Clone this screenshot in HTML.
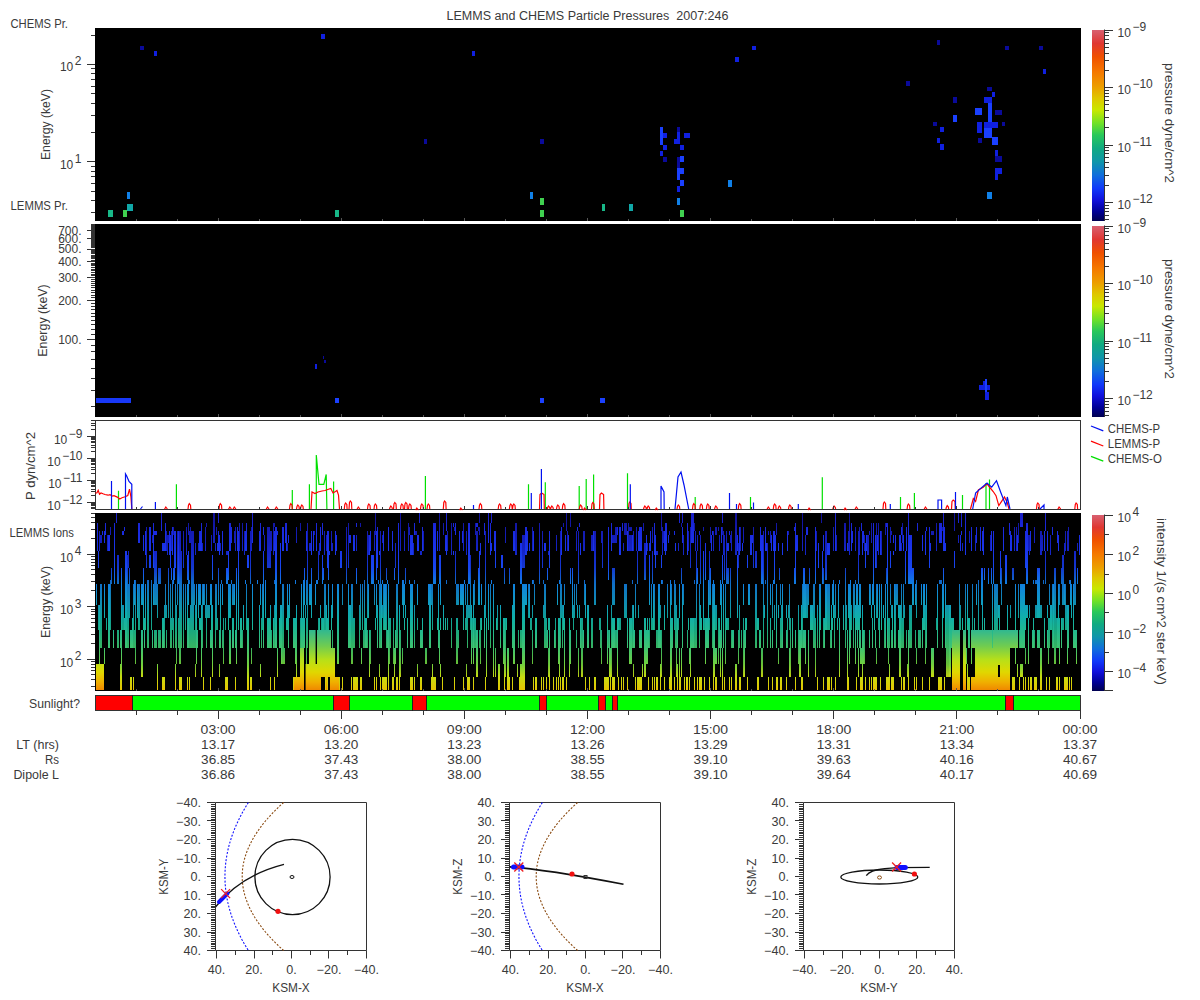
<!DOCTYPE html><html><head><meta charset="utf-8"><title>LEMMS and CHEMS Particle Pressures</title><style>html,body{margin:0;padding:0;background:#fff;width:1200px;height:1000px;overflow:hidden}svg{display:block;font-family:"Liberation Sans",sans-serif}</style></head><body><svg width="1200" height="1000" viewBox="0 0 1200 1000" font-family="Liberation Sans, sans-serif" font-size="12"><defs><linearGradient id="cm" x1="0" y1="0" x2="0" y2="1"><stop offset="0.000" stop-color="#d86070"/><stop offset="0.070" stop-color="#e03732"/><stop offset="0.140" stop-color="#f05000"/><stop offset="0.220" stop-color="#f57800"/><stop offset="0.300" stop-color="#eca000"/><stop offset="0.360" stop-color="#dec800"/><stop offset="0.420" stop-color="#c8e800"/><stop offset="0.490" stop-color="#6ee128"/><stop offset="0.550" stop-color="#28c85a"/><stop offset="0.620" stop-color="#10aa82"/><stop offset="0.690" stop-color="#1096aa"/><stop offset="0.760" stop-color="#106edc"/><stop offset="0.830" stop-color="#1038fa"/><stop offset="0.890" stop-color="#1010dc"/><stop offset="0.950" stop-color="#000096"/><stop offset="1.000" stop-color="#000050"/></linearGradient><linearGradient id="sg" gradientUnits="userSpaceOnUse" x1="0" y1="513" x2="0" y2="691"><stop offset="0.0000" stop-color="#1a1ec0"/><stop offset="0.0955" stop-color="#1a2ae0"/><stop offset="0.2191" stop-color="#1a36ec"/><stop offset="0.3090" stop-color="#1848f0"/><stop offset="0.3989" stop-color="#1080e0"/><stop offset="0.5169" stop-color="#10a0c0"/><stop offset="0.5899" stop-color="#10b0a8"/><stop offset="0.6573" stop-color="#20b890"/><stop offset="0.7584" stop-color="#40c470"/><stop offset="0.8483" stop-color="#70d040"/><stop offset="0.9213" stop-color="#c8dc10"/><stop offset="1.0000" stop-color="#e8c000"/></linearGradient><linearGradient id="bg" gradientUnits="userSpaceOnUse" x1="0" y1="630" x2="0" y2="690"><stop offset="0.0000" stop-color="#30b890"/><stop offset="0.2667" stop-color="#70cc50"/><stop offset="0.5000" stop-color="#b8e018"/><stop offset="0.7000" stop-color="#e0d800"/><stop offset="0.8667" stop-color="#f0b000"/><stop offset="1.0000" stop-color="#f08800"/></linearGradient><linearGradient id="sgd" gradientUnits="userSpaceOnUse" x1="0" y1="513" x2="0" y2="691"><stop offset="0.0000" stop-color="#100f90"/><stop offset="0.0955" stop-color="#141ab0"/><stop offset="0.2191" stop-color="#1424c8"/><stop offset="0.3090" stop-color="#1438d0"/><stop offset="0.3989" stop-color="#1070c8"/><stop offset="0.5169" stop-color="#1090b0"/><stop offset="0.5899" stop-color="#10a098"/><stop offset="0.6573" stop-color="#18a880"/><stop offset="0.7584" stop-color="#38b460"/><stop offset="0.8483" stop-color="#68c038"/><stop offset="0.9213" stop-color="#c0d010"/><stop offset="1.0000" stop-color="#e0a800"/></linearGradient></defs><rect width="1200" height="1000" fill="#fff"/>
<text x="587.5" y="20" text-anchor="middle" fill="#3a3a3a" textLength="282" lengthAdjust="spacingAndGlyphs">LEMMS and CHEMS Particle Pressures  2007:246</text>
<rect x="95" y="28" width="986" height="193" fill="#000"/>
<rect x="140" y="46" width="4" height="4" fill="#0a0a9a"/>
<rect x="154" y="51" width="3" height="5" fill="#1020e0"/>
<rect x="321" y="34" width="4" height="5" fill="#1020e0"/>
<rect x="127" y="192" width="3" height="7" fill="#1080e8"/>
<rect x="127" y="204" width="6" height="7" fill="#10a8a8"/>
<rect x="108" y="210" width="5" height="7" fill="#18b888"/>
<rect x="123" y="210" width="4" height="7" fill="#40d050"/>
<rect x="335" y="210" width="4" height="7" fill="#18b888"/>
<rect x="472" y="51" width="3" height="5" fill="#1020e0"/>
<rect x="752" y="46" width="4" height="4" fill="#1020e0"/>
<rect x="735" y="57" width="4" height="5" fill="#1020e0"/>
<rect x="424" y="139" width="3" height="5" fill="#0a0a9a"/>
<rect x="540" y="139" width="4" height="5" fill="#0a0a9a"/>
<rect x="728" y="180" width="4" height="7" fill="#1080e8"/>
<rect x="530" y="192" width="3" height="7" fill="#1080e8"/>
<rect x="540" y="198" width="4" height="7" fill="#40d050"/>
<rect x="540" y="210" width="4" height="7" fill="#40d050"/>
<rect x="602" y="204" width="3" height="7" fill="#18b888"/>
<rect x="629" y="204" width="4" height="7" fill="#10a8a8"/>
<rect x="660" y="127" width="3" height="18" fill="#1a40ff"/>
<rect x="663" y="133" width="4" height="5" fill="#1020e0"/>
<rect x="663" y="145" width="4" height="5" fill="#1020e0"/>
<rect x="660" y="151" width="3" height="5" fill="#1020e0"/>
<rect x="663" y="157" width="4" height="5" fill="#0a0a9a"/>
<rect x="677" y="127" width="3" height="5" fill="#0a0a9a"/>
<rect x="677" y="132" width="3" height="7" fill="#1020e0"/>
<rect x="674" y="139" width="6" height="5" fill="#1020e0"/>
<rect x="680" y="145" width="4" height="5" fill="#1020e0"/>
<rect x="684" y="133" width="6" height="5" fill="#1020e0"/>
<rect x="677" y="157" width="3" height="11" fill="#0a0a9a"/>
<rect x="680" y="156" width="4" height="6" fill="#1a40ff"/>
<rect x="677" y="168" width="7" height="6" fill="#1a40ff"/>
<rect x="677" y="174" width="3" height="6" fill="#1a40ff"/>
<rect x="680" y="180" width="4" height="6" fill="#1a40ff"/>
<rect x="677" y="186" width="3" height="6" fill="#1020e0"/>
<rect x="677" y="198" width="3" height="7" fill="#1080e8"/>
<rect x="680" y="210" width="4" height="7" fill="#40d050"/>
<rect x="937" y="40" width="3" height="5" fill="#0a0a9a"/>
<rect x="1005" y="46" width="4" height="4" fill="#0a0a9a"/>
<rect x="1039" y="46" width="4" height="4" fill="#0a0a9a"/>
<rect x="1043" y="69" width="3" height="5" fill="#1020e0"/>
<rect x="906" y="81" width="4" height="5" fill="#0a0a9a"/>
<rect x="953" y="97" width="4" height="6" fill="#0a0a9a"/>
<rect x="953" y="115" width="4" height="7" fill="#1a40ff"/>
<rect x="933" y="122" width="4" height="4" fill="#0a0a9a"/>
<rect x="940" y="127" width="4" height="5" fill="#1020e0"/>
<rect x="937" y="138" width="3" height="5" fill="#1020e0"/>
<rect x="940" y="144" width="4" height="6" fill="#1020e0"/>
<rect x="987" y="87" width="5" height="4" fill="#0a0a9a"/>
<rect x="992" y="92" width="3" height="5" fill="#1020e0"/>
<rect x="984" y="97" width="8" height="6" fill="#1020e0"/>
<rect x="988" y="103" width="4" height="19" fill="#1a40ff"/>
<rect x="975" y="108" width="7" height="7" fill="#1a40ff"/>
<rect x="995" y="110" width="7" height="5" fill="#0a0a9a"/>
<rect x="984" y="122" width="14" height="6" fill="#1020e0"/>
<rect x="988" y="128" width="4" height="10" fill="#1a40ff"/>
<rect x="984" y="128" width="4" height="10" fill="#1a40ff"/>
<rect x="1002" y="122" width="3" height="4" fill="#0a0a9a"/>
<rect x="977" y="122" width="5" height="11" fill="#1020e0"/>
<rect x="992" y="137" width="6" height="8" fill="#1a40ff"/>
<rect x="978" y="138" width="4" height="5" fill="#0a0a9a"/>
<rect x="995" y="150" width="3" height="6" fill="#1020e0"/>
<rect x="995" y="156" width="7" height="6" fill="#0a0a9a"/>
<rect x="995" y="168" width="7" height="6" fill="#1020e0"/>
<rect x="995" y="174" width="3" height="6" fill="#1020e0"/>
<rect x="987" y="192" width="5" height="7" fill="#1080e8"/>
<path d="M136.5 219L136.5 221M177.5 219L177.5 221M218.5 218L218.5 221M259.5 219L259.5 221M300.5 219L300.5 221M341.5 218L341.5 221M382.5 219L382.5 221M423.5 219L423.5 221M464.5 218L464.5 221M505.5 219L505.5 221M546.5 219L546.5 221M587.5 218L587.5 221M628.5 219L628.5 221M669.5 219L669.5 221M710.5 218L710.5 221M751.5 219L751.5 221M792.5 219L792.5 221M833.5 218L833.5 221M874.5 219L874.5 221M915.5 219L915.5 221M956.5 218L956.5 221M997.5 219L997.5 221M1038.5 219L1038.5 221" stroke="#555" stroke-width="1" fill="none"/>
<path d="M91 212.5L95 212.5M91 200.5L95 200.5M91 191.5L95 191.5M91 183.5L95 183.5M91 176.5L95 176.5M91 171.5L95 171.5M91 166.5L95 166.5M87 161.5L95 161.5M91 132.5L95 132.5M91 115.5L95 115.5M91 103.5L95 103.5M91 93.5L95 93.5M91 86.5L95 86.5M91 79.5L95 79.5M91 73.5L95 73.5M91 68.5L95 68.5M87 64.5L95 64.5M91 35.5L95 35.5" stroke="#333" stroke-width="1" fill="none"/>
<text x="59.93" y="71.4" fill="#3a3a3a">10</text>
<text x="74.83" y="65.3" fill="#3a3a3a">2</text>
<text x="59.93" y="168.8" fill="#3a3a3a">10</text>
<text x="74.83" y="162.7" fill="#3a3a3a">1</text>
<text transform="translate(49.8,124.5) rotate(-90)" text-anchor="middle" fill="#3a3a3a" textLength="71" lengthAdjust="spacingAndGlyphs">Energy (keV)</text>
<text x="10.5" y="28" fill="#3a3a3a" textLength="57.5" lengthAdjust="spacingAndGlyphs">CHEMS Pr.</text>
<text x="10.5" y="210" fill="#3a3a3a" textLength="57.5" lengthAdjust="spacingAndGlyphs">LEMMS Pr.</text>
<rect x="1092" y="30" width="12" height="191" fill="url(#cm)"/>
<path d="M1104.5 29.5L1104.5 221M1104 30.5L1113 30.5M1104 87.5L1113 87.5M1104 145.5L1113 145.5M1104 202.5L1113 202.5M1104 70.5L1109 70.5M1104 60.5L1109 60.5M1104 53.5L1109 53.5M1104 47.5L1109 47.5M1104 43.5L1109 43.5M1104 39.5L1109 39.5M1104 35.5L1109 35.5M1104 32.5L1109 32.5M1104 127.5L1109 127.5M1104 117.5L1109 117.5M1104 110.5L1109 110.5M1104 104.5L1109 104.5M1104 100.5L1109 100.5M1104 96.5L1109 96.5M1104 93.5L1109 93.5M1104 90.5L1109 90.5M1104 185.5L1109 185.5M1104 175.5L1109 175.5M1104 167.5L1109 167.5M1104 162.5L1109 162.5M1104 157.5L1109 157.5M1104 153.5L1109 153.5M1104 150.5L1109 150.5M1104 147.5L1109 147.5M1104 219.5L1109 219.5M1104 215.5L1109 215.5M1104 211.5L1109 211.5M1104 208.5L1109 208.5M1104 205.5L1109 205.5M1104 219.5L1109 219.5M1104 215.5L1109 215.5M1104 211.5L1109 211.5M1104 208.5L1109 208.5M1104 205.5L1109 205.5" stroke="#333" stroke-width="1" fill="none"/>
<text x="1117.5" y="37.4" fill="#3a3a3a">10</text>
<text x="1132.4" y="31.3" fill="#3a3a3a">−9</text>
<text x="1117.5" y="94.4" fill="#3a3a3a">10</text>
<text x="1132.4" y="88.3" fill="#3a3a3a">−10</text>
<text x="1117.5" y="152.4" fill="#3a3a3a">10</text>
<text x="1132.4" y="146.3" fill="#3a3a3a">−11</text>
<text x="1117.5" y="209.4" fill="#3a3a3a">10</text>
<text x="1132.4" y="203.3" fill="#3a3a3a">−12</text>
<text transform="translate(1164.5,123) rotate(90)" text-anchor="middle" fill="#3a3a3a" textLength="120" lengthAdjust="spacingAndGlyphs">pressure dyne/cm^2</text>
<rect x="95" y="224" width="986" height="193" fill="#000"/>
<rect x="96" y="398" width="35" height="5" fill="#1838f8"/>
<rect x="540" y="398" width="4" height="5" fill="#1a40ff"/>
<rect x="600" y="398" width="5" height="5" fill="#1a40ff"/>
<rect x="315" y="364" width="2" height="5" fill="#1020e0"/>
<rect x="323" y="356" width="1" height="3" fill="#0a0a9a"/>
<rect x="324" y="360" width="2" height="3" fill="#0a0a9a"/>
<rect x="335" y="398" width="4" height="5" fill="#1a40ff"/>
<rect x="979" y="385" width="11" height="5" fill="#1020e0"/>
<rect x="983" y="381" width="4" height="4" fill="#1020e0"/>
<rect x="985" y="379" width="2" height="13" fill="#1a40ff"/>
<rect x="985" y="392" width="4" height="8" fill="#1020e0"/>
<path d="M136.5 415L136.5 417M177.5 415L177.5 417M218.5 414L218.5 417M259.5 415L259.5 417M300.5 415L300.5 417M341.5 414L341.5 417M382.5 415L382.5 417M423.5 415L423.5 417M464.5 414L464.5 417M505.5 415L505.5 417M546.5 415L546.5 417M587.5 414L587.5 417M628.5 415L628.5 417M669.5 415L669.5 417M710.5 414L710.5 417M751.5 415L751.5 417M792.5 415L792.5 417M833.5 414L833.5 417M874.5 415L874.5 417M915.5 415L915.5 417M956.5 414L956.5 417M997.5 415L997.5 417M1038.5 415L1038.5 417" stroke="#555" stroke-width="1" fill="none"/>
<path d="M91 406.5L95 406.5M91 390.5L95 390.5M91 378.5L95 378.5M91 368.5L95 368.5M91 359.5L95 359.5M91 351.5L95 351.5M91 345.5L95 345.5M87 339.5L95 339.5M91 334.5L95 334.5M91 329.5L95 329.5M91 324.5L95 324.5M91 320.5L95 320.5M91 316.5L95 316.5M91 313.5L95 313.5M91 309.5L95 309.5M91 306.5L95 306.5M91 303.5L95 303.5M87 300.5L95 300.5M91 297.5L95 297.5M91 295.5L95 295.5M91 292.5L95 292.5M91 290.5L95 290.5M91 287.5L95 287.5M91 285.5L95 285.5M91 283.5L95 283.5M91 281.5L95 281.5M91 279.5L95 279.5M87 277.5L95 277.5M91 275.5L95 275.5M91 274.5L95 274.5M91 272.5L95 272.5M91 270.5L95 270.5M91 269.5L95 269.5M91 267.5L95 267.5M91 265.5L95 265.5M91 264.5L95 264.5M91 263.5L95 263.5M87 261.5L95 261.5M91 260.5L95 260.5M91 258.5L95 258.5M91 257.5L95 257.5M91 256.5L95 256.5M91 255.5L95 255.5M91 253.5L95 253.5M91 252.5L95 252.5M91 251.5L95 251.5M91 250.5L95 250.5M87 249.5L95 249.5M91 247.5L95 247.5M91 246.5L95 246.5M91 245.5L95 245.5M91 244.5L95 244.5M91 243.5L95 243.5M91 242.5L95 242.5M91 241.5L95 241.5M91 240.5L95 240.5M91 239.5L95 239.5M87 238.5L95 238.5M91 237.5L95 237.5M91 237.5L95 237.5M91 236.5L95 236.5M91 235.5L95 235.5M91 234.5L95 234.5M91 233.5L95 233.5M91 232.5L95 232.5M91 231.5L95 231.5M91 231.5L95 231.5M87 230.5L95 230.5M91 229.5L95 229.5M91 228.5L95 228.5M91 227.5L95 227.5M91 227.5L95 227.5M91 226.5L95 226.5M91 225.5L95 225.5M91 224.5L95 224.5M91 224.5L95 224.5" stroke="#333" stroke-width="1" fill="none"/>
<text x="81.5" y="343.7" text-anchor="end" fill="#3a3a3a">100.</text>
<text x="81.5" y="304.81" text-anchor="end" fill="#3a3a3a">200.</text>
<text x="81.5" y="282.06" text-anchor="end" fill="#3a3a3a">300.</text>
<text x="81.5" y="265.91" text-anchor="end" fill="#3a3a3a">400.</text>
<text x="81.5" y="253.39" text-anchor="end" fill="#3a3a3a">500.</text>
<text x="81.5" y="243.16" text-anchor="end" fill="#3a3a3a">600.</text>
<text x="81.5" y="234.51" text-anchor="end" fill="#3a3a3a">700.</text>
<text transform="translate(46.6,320.5) rotate(-90)" text-anchor="middle" fill="#3a3a3a" textLength="72.5" lengthAdjust="spacingAndGlyphs">Energy (keV)</text>
<rect x="1092" y="226" width="12" height="191" fill="url(#cm)"/>
<path d="M1104.5 225.5L1104.5 417M1104 226.5L1113 226.5M1104 283.5L1113 283.5M1104 341.5L1113 341.5M1104 398.5L1113 398.5M1104 266.5L1109 266.5M1104 256.5L1109 256.5M1104 249.5L1109 249.5M1104 243.5L1109 243.5M1104 239.5L1109 239.5M1104 235.5L1109 235.5M1104 231.5L1109 231.5M1104 228.5L1109 228.5M1104 323.5L1109 323.5M1104 313.5L1109 313.5M1104 306.5L1109 306.5M1104 300.5L1109 300.5M1104 296.5L1109 296.5M1104 292.5L1109 292.5M1104 289.5L1109 289.5M1104 286.5L1109 286.5M1104 381.5L1109 381.5M1104 371.5L1109 371.5M1104 363.5L1109 363.5M1104 358.5L1109 358.5M1104 353.5L1109 353.5M1104 349.5L1109 349.5M1104 346.5L1109 346.5M1104 343.5L1109 343.5M1104 415.5L1109 415.5M1104 411.5L1109 411.5M1104 407.5L1109 407.5M1104 404.5L1109 404.5M1104 401.5L1109 401.5M1104 415.5L1109 415.5M1104 411.5L1109 411.5M1104 407.5L1109 407.5M1104 404.5L1109 404.5M1104 401.5L1109 401.5" stroke="#333" stroke-width="1" fill="none"/>
<text x="1117.5" y="233.4" fill="#3a3a3a">10</text>
<text x="1132.4" y="227.3" fill="#3a3a3a">−9</text>
<text x="1117.5" y="290.4" fill="#3a3a3a">10</text>
<text x="1132.4" y="284.3" fill="#3a3a3a">−10</text>
<text x="1117.5" y="348.4" fill="#3a3a3a">10</text>
<text x="1132.4" y="342.3" fill="#3a3a3a">−11</text>
<text x="1117.5" y="405.4" fill="#3a3a3a">10</text>
<text x="1132.4" y="399.3" fill="#3a3a3a">−12</text>
<text transform="translate(1164.5,319) rotate(90)" text-anchor="middle" fill="#3a3a3a" textLength="120" lengthAdjust="spacingAndGlyphs">pressure dyne/cm^2</text>
<rect x="95" y="420" width="986" height="90" fill="#333"/>
<rect x="96" y="421" width="984" height="88" fill="#fff"/>
<path d="M118.5 509L118.5 490.8M176.4 509L176.4 484.3M292.3 509L292.3 490M309.4 509L309.4 484.3M316.3 509L316.3 455L319 484.3L323.8 484.3L326.2 474.5L326.9 509M333.6 509L333.6 481.5M425.4 509L425.4 476M528.5 509L528.5 484.3M545.3 509L545.3 482.2M579.2 509L579.2 486M586.2 509L586.2 479M593.6 509L593.6 474.5M627.5 509L627.5 473.3M695.2 509L695.2 497M750.5 509L750.5 497M822.3 509L822.3 477.3M900.5 509L900.5 497M914.4 509L914.4 493M962.5 509L962.5 495M986 509L986 483M989.5 509L989.5 479.6" stroke="#00e000" stroke-width="1.2" fill="none"/>
<path d="M95.5 493.2L97 492.8L98.2 490.3L99.5 494.2L101 493L103 493.8L105 494.5L108 495.2L110 494.6L112 496L114 495.6L117.3 497.1L119.7 499L122 497.8L125 496.8L127.8 495.5L129.5 489.2L130.9 496.7L131.8 509M311 509L312 492L315 493.5L318 492L322 491L325 490.5L327 489.7L330.8 488.5L333 493L335.5 491.5L337 490.5L338.5 495L339.5 509M970.5 509L973.3 498.6L975.6 501.4L978.4 490L983.2 487.2L987 483.8L990.3 488L993.2 491.5L996 495.7L998.8 505.6L1001.6 501.4L1004.5 497L1007.3 502.8L1009 509M539.5 509L540 494.5L541.6 493L544 494.5L544.3 509M599.5 509L600 494.5L601.44 493L603.6 494.5L603.9 509M951.5 509L952 501.5L953.2 500L955 501.5L955.3 509M164.5 509L165 508.5L165.8 507L167 508.5L167.3 509M188 509L188.5 505.2L189.3 503.7L190.5 505.2L190.8 509M219 509L219.5 505.2L220.3 503.7L221.5 505.2L221.8 509M228.5 509L229 508.5L229.8 507L231 508.5L231.3 509M233 509L233.5 508.5L234.3 507L235.5 508.5L235.8 509M266.2 509L266.7 508.5L267.5 507L268.7 508.5L269 509M275 509L275.5 508.5L276.3 507L277.5 508.5L277.8 509M289.5 509L290 505.2L290.8 503.7L292 505.2L292.3 509M296.5 509L297 506.5L297.8 505L299 506.5L299.3 509M300.5 509L301 506.5L301.8 505L303 506.5L303.3 509M344.3 509L344.8 504.5L345.6 503L346.8 504.5L347.1 509M349 509L349.5 502.5L350.3 501L351.5 502.5L351.8 509M357 509L357.5 508.5L358.3 507L359.5 508.5L359.8 509M367.5 509L368 505.5L368.8 504L370 505.5L370.3 509M374 509L374.5 505.5L375.3 504L376.5 505.5L376.8 509M389.5 509L390 507.5L390.8 506L392 507.5L392.3 509M393.5 509L394 504L394.8 502.5L396 504L396.3 509M400.5 509L401 505.5L401.8 504L403 505.5L403.3 509M404.5 509L405 504L405.8 502.5L407 504L407.3 509M408.5 509L409 505.5L409.8 504L411 505.5L411.3 509M415.5 509L416 509.5L416.8 508L418 509.5L418.3 509M420.5 509L421 505.5L421.8 504L423 505.5L423.3 509M427 509L427.5 505.5L428.3 504L429.5 505.5L429.8 509M443.3 509L443.8 502.5L444.6 501L445.8 502.5L446.1 509M459.5 509L460 509.5L460.8 508L462 509.5L462.3 509M479 509L479.5 505.2L480.3 503.7L481.5 505.2L481.8 509M498.2 509L498.7 505.5L499.5 504L500.7 505.5L501 509M509.4 509L509.9 505.5L510.7 504L511.9 505.5L512.2 509M512.5 509L513 505.5L513.8 504L515 505.5L515.3 509M547.2 509L547.7 507.5L548.5 506L549.7 507.5L550 509M550.5 509L551 507.5L551.8 506L553 507.5L553.3 509M556.5 509L557 506.5L557.8 505L559 506.5L559.3 509M562.3 509L562.8 505.2L563.6 503.7L564.8 505.2L565.1 509M579.3 509L579.8 506.5L580.6 505L581.8 506.5L582.1 509M583.3 509L583.8 509.5L584.6 508L585.8 509.5L586.1 509M591.5 509L592 504L592.8 502.5L594 504L594.3 509M628.5 509L629 503.5L629.8 502L631 503.5L631.3 509M643.5 509L644 507.5L644.8 506L646 507.5L646.3 509M646.9 509L647.4 507.5L648.2 506L649.4 507.5L649.7 509M655 509L655.5 509.5L656.3 508L657.5 509.5L657.8 509M677 509L677.5 506.5L678.3 505L679.5 506.5L679.8 509M692.5 509L693 505.2L693.8 503.7L695 505.2L695.3 509M699.8 509L700.3 505.5L701.1 504L702.3 505.5L702.6 509M706.4 509L706.9 505.5L707.7 504L708.9 505.5L709.2 509M714.5 509L715 507.5L715.8 506L717 507.5L717.3 509M738.3 509L738.8 505.2L739.6 503.7L740.8 505.2L741.1 509M767 509L767.5 508.5L768.3 507L769.5 508.5L769.8 509M773.3 509L773.8 505.5L774.6 504L775.8 505.5L776.1 509M778 509L778.5 507.5L779.3 506L780.5 507.5L780.8 509M788.5 509L789 506.5L789.8 505L791 506.5L791.3 509M807.8 509L808.3 509.5L809.1 508L810.3 509.5L810.6 509M832.8 509L833.3 507.5L834.1 506L835.3 507.5L835.6 509M843.8 509L844.3 509.5L845.1 508L846.3 509.5L846.6 509M855 509L855.5 508.5L856.3 507L857.5 508.5L857.8 509M883 509L883.5 503.5L884.3 502L885.5 503.5L885.8 509M907.1 509L907.6 505.5L908.4 504L909.6 505.5L909.9 509M924.1 509L924.6 508.5L925.4 507L926.6 508.5L926.9 509M945.9 509L946.4 507.1L947.2 505.6L948.4 507.1L948.7 509M1036.5 509L1037 504.5L1037.8 503L1039 504.5L1039.3 509M1057.8 509L1058.3 508.5L1059.1 507L1060.3 508.5L1060.6 509M1074.8 509L1075.3 504.5L1076.1 503L1077.3 504.5L1077.6 509" stroke="#f00" stroke-width="1.2" fill="none"/>
<path d="M111.5 509L111.5 481M125.5 509L125.5 474L126.7 476L129 481.5L131.8 484.3L131.8 509M140.5 509L142.5 506.5M155.4 509L155.4 502M473.5 509L473.5 505M531.3 509L531.3 493M541.4 509L541.4 469M630.3 509L630.3 484.3M661 509L661 486L664 492L664.2 509M675 509L678 477L681 472L684 485L688.7 509M729.5 509L729.5 493M736.5 509L736.5 504M753.5 509L753.5 502.5M798.3 509L798.3 504M890.3 509L890.3 504M938 509L938 500L941.6 500L941.6 509M955.5 509L955.5 492M972.7 509L975.6 493L980.4 488.6L987 483L991.7 487.2L996.5 480.7L1001 493L1005.9 505.6L1007.3 497L1010 509M1040 509L1044 505L1044 509" stroke="#0010f0" stroke-width="1.2" fill="none"/>
<path d="M136.5 507L136.5 509M177.5 507L177.5 509M218.5 506L218.5 509M259.5 507L259.5 509M300.5 507L300.5 509M341.5 506L341.5 509M382.5 507L382.5 509M423.5 507L423.5 509M464.5 506L464.5 509M505.5 507L505.5 509M546.5 507L546.5 509M587.5 506L587.5 509M628.5 507L628.5 509M669.5 507L669.5 509M710.5 506L710.5 509M751.5 507L751.5 509M792.5 507L792.5 509M833.5 506L833.5 509M874.5 507L874.5 509M915.5 507L915.5 509M956.5 506L956.5 509M997.5 507L997.5 509M1038.5 507L1038.5 509" stroke="#333" stroke-width="1" fill="none"/>
<path d="M91 508.5L95 508.5M91 507.5L95 507.5M91 505.5L95 505.5M91 504.5L95 504.5M91 503.5L95 503.5M87 502.5L95 502.5M91 495.5L95 495.5M91 491.5L95 491.5M91 489.5L95 489.5M91 486.5L95 486.5M91 485.5L95 485.5M91 483.5L95 483.5M91 482.5L95 482.5M91 481.5L95 481.5M87 480.5L95 480.5M91 473.5L95 473.5M91 469.5L95 469.5M91 467.5L95 467.5M91 464.5L95 464.5M91 463.5L95 463.5M91 461.5L95 461.5M91 460.5L95 460.5M91 459.5L95 459.5M87 458.5L95 458.5M91 451.5L95 451.5M91 447.5L95 447.5M91 445.5L95 445.5M91 442.5L95 442.5M91 441.5L95 441.5M91 439.5L95 439.5M91 438.5L95 438.5M91 437.5L95 437.5M87 436.5L95 436.5M91 429.5L95 429.5M91 425.5L95 425.5M91 423.5L95 423.5M91 420.5L95 420.5" stroke="#333" stroke-width="1" fill="none"/>
<text x="53.91" y="443.7" fill="#3a3a3a">10</text>
<text x="68.81" y="437.6" fill="#3a3a3a">−9</text>
<text x="47.24" y="465.7" fill="#3a3a3a">10</text>
<text x="62.14" y="459.6" fill="#3a3a3a">−10</text>
<text x="48.13" y="487.7" fill="#3a3a3a">10</text>
<text x="63.03" y="481.6" fill="#3a3a3a">−11</text>
<text x="47.24" y="509.7" fill="#3a3a3a">10</text>
<text x="62.14" y="503.6" fill="#3a3a3a">−12</text>
<text transform="translate(34.5,466) rotate(-90)" text-anchor="middle" fill="#3a3a3a" textLength="68" lengthAdjust="spacingAndGlyphs">P dyn/cm^2</text>
<path d="M1091 426L1103.3 430.8" stroke="#0010f0" stroke-width="1.3"/>
<text x="1107.8" y="432.9" fill="#3a3a3a" textLength="52.3" lengthAdjust="spacingAndGlyphs">CHEMS-P</text>
<path d="M1091 441.2L1103.3 446" stroke="#f00" stroke-width="1.3"/>
<text x="1107.8" y="447.9" fill="#3a3a3a" textLength="52.3" lengthAdjust="spacingAndGlyphs">LEMMS-P</text>
<path d="M1091 456.4L1103.3 461.2" stroke="#00e000" stroke-width="1.3"/>
<text x="1107.8" y="462.9" fill="#3a3a3a" textLength="54" lengthAdjust="spacingAndGlyphs">CHEMS-O</text>
<rect x="95" y="513" width="986" height="178" fill="#000"/>
<path d="M96 584h1v21h-1zM97 523h1v28h-1zM98 551h1v17h-1zM99 605h1v59h-1zM102 531h1v4h-1zM104 531h1v12h-1zM104 584h1v34h-1zM104 648h1v16h-1zM105 523h1v12h-1zM108 535h2v16h-2zM108 584h2v64h-2zM113 630h1v18h-1zM114 523h1v61h-1zM116 513h1v10h-1zM120 630h1v18h-1zM120 664h1v26h-1zM121 568h1v122h-1zM122 531h2v4h-2zM124 527h1v4h-1zM124 618h1v12h-1zM125 551h2v97h-2zM130 630h2v18h-2zM130 677h2v13h-2zM132 618h1v30h-1zM133 677h1v13h-1zM134 580h1v25h-1zM137 584h1v34h-1zM138 523h2v20h-2zM141 584h2v21h-2zM141 630h2v47h-2zM143 535h1v16h-1zM143 568h1v62h-1zM144 618h1v30h-1zM145 531h1v24h-1zM145 584h1v46h-1zM149 527h2v24h-2zM149 555h2v13h-2zM152 630h1v18h-1zM153 523h1v45h-1zM153 584h1v21h-1zM154 531h3v4h-3zM157 664h1v26h-1zM161 513h1v18h-1zM162 543h2v8h-2zM162 618h2v30h-2zM162 677h2v13h-2zM164 543h1v8h-1zM164 677h1v13h-1zM165 523h1v28h-1zM169 531h1v24h-1zM170 535h1v33h-1zM171 568h1v12h-1zM172 527h1v28h-1zM173 568h1v16h-1zM174 531h1v49h-1zM175 531h1v37h-1zM175 664h1v26h-1zM178 531h1v53h-1zM179 677h2v13h-2zM181 677h1v13h-1zM187 555h1v25h-1zM187 584h1v64h-1zM187 677h1v13h-1zM188 551h1v54h-1zM188 618h1v30h-1zM189 677h1v13h-1zM196 584h1v80h-1zM197 630h1v18h-1zM198 584h1v34h-1zM199 531h2v20h-2zM199 584h2v21h-2zM199 618h2v12h-2zM201 523h1v28h-1zM201 605h1v72h-1zM203 584h1v21h-1zM203 677h1v13h-1zM210 584h1v21h-1zM210 630h1v18h-1zM210 677h1v13h-1zM211 584h1v64h-1zM212 555h1v25h-1zM212 605h1v72h-1zM217 543h1v8h-1zM218 513h1v10h-1zM218 531h1v20h-1zM219 535h1v20h-1zM219 630h1v18h-1zM220 584h1v64h-1zM222 531h1v24h-1zM222 584h1v21h-1zM225 677h1v13h-1zM226 568h2v16h-2zM226 677h2v13h-2zM228 551h1v29h-1zM228 584h1v46h-1zM229 523h2v28h-2zM229 584h2v34h-2zM229 630h2v34h-2zM231 527h1v16h-1zM232 618h2v30h-2zM234 584h1v21h-1zM235 630h1v18h-1zM235 677h1v13h-1zM236 568h1v96h-1zM237 527h1v24h-1zM238 531h1v99h-1zM240 618h2v30h-2zM243 605h1v25h-1zM245 531h1v20h-1zM245 580h1v4h-1zM246 523h1v28h-1zM247 555h2v13h-2zM247 618h2v72h-2zM250 677h1v13h-1zM251 677h1v13h-1zM252 513h1v30h-1zM252 584h1v46h-1zM257 580h1v4h-1zM259 531h1v20h-1zM259 605h1v43h-1zM260 523h1v28h-1zM260 584h1v21h-1zM260 664h1v13h-1zM263 527h1v8h-1zM263 551h1v97h-1zM265 580h1v38h-1zM267 618h3v30h-3zM270 605h1v43h-1zM270 677h1v13h-1zM273 618h1v30h-1zM274 531h1v20h-1zM274 677h1v13h-1zM275 527h2v121h-2zM277 531h1v4h-1zM277 648h1v29h-1zM279 618h1v30h-1zM280 543h1v41h-1zM280 605h1v43h-1zM281 605h1v59h-1zM282 527h2v24h-2zM285 523h1v20h-1zM286 523h1v28h-1zM286 618h1v12h-1zM287 584h1v46h-1zM288 535h1v8h-1zM288 605h1v43h-1zM289 584h1v34h-1zM293 618h2v30h-2zM293 677h2v13h-2zM295 580h1v4h-1zM295 618h1v46h-1zM295 677h1v13h-1zM296 605h1v85h-1zM300 677h1v13h-1zM301 584h1v64h-1zM301 677h1v13h-1zM302 618h1v46h-1zM303 580h1v68h-1zM303 677h1v13h-1zM304 568h1v37h-1zM304 618h1v30h-1zM306 531h1v20h-1zM309 584h2v21h-2zM309 664h2v26h-2zM311 531h1v24h-1zM311 568h1v50h-1zM311 677h1v13h-1zM312 677h1v13h-1zM313 531h1v20h-1zM313 677h1v13h-1zM314 630h1v18h-1zM314 677h1v13h-1zM315 584h1v21h-1zM316 523h1v28h-1zM316 580h1v4h-1zM317 580h1v4h-1zM317 648h1v16h-1zM319 618h1v46h-1zM320 527h1v24h-1zM320 605h1v13h-1zM320 677h1v13h-1zM322 523h1v12h-1zM322 555h1v29h-1zM322 618h1v12h-1zM323 568h1v12h-1zM323 618h1v46h-1zM325 677h1v13h-1zM326 605h1v43h-1zM326 677h1v13h-1zM327 531h1v37h-1zM327 618h1v12h-1zM327 664h1v26h-1zM328 531h1v49h-1zM328 584h1v80h-1zM329 551h1v4h-1zM331 605h1v25h-1zM331 677h1v13h-1zM332 584h1v34h-1zM333 677h2v13h-2zM335 531h1v24h-1zM336 535h1v16h-1zM337 584h2v80h-2zM339 677h1v13h-1zM340 551h2v17h-2zM342 677h1v13h-1zM348 584h1v64h-1zM349 535h2v8h-2zM349 605h2v43h-2zM351 677h1v13h-1zM353 535h2v16h-2zM353 677h2v13h-2zM355 677h1v13h-1zM356 523h1v4h-1zM356 568h1v16h-1zM356 677h1v13h-1zM357 677h1v13h-1zM360 677h1v13h-1zM361 648h1v16h-1zM361 677h1v13h-1zM365 618h2v30h-2zM368 584h1v34h-1zM369 535h1v20h-1zM369 630h1v47h-1zM370 531h1v20h-1zM371 555h3v29h-3zM374 677h1v13h-1zM375 618h1v12h-1zM376 531h1v49h-1zM376 584h1v34h-1zM376 677h1v13h-1zM377 527h1v41h-1zM377 605h1v43h-1zM378 580h1v4h-1zM379 551h1v4h-1zM380 677h1v13h-1zM381 584h1v64h-1zM382 580h1v4h-1zM382 677h1v13h-1zM383 531h1v20h-1zM383 677h1v13h-1zM384 584h2v46h-2zM384 677h2v13h-2zM386 677h1v13h-1zM387 580h1v4h-1zM387 630h1v18h-1zM388 527h1v24h-1zM388 584h1v106h-1zM392 531h1v20h-1zM392 677h1v13h-1zM393 677h1v13h-1zM394 568h1v12h-1zM394 648h1v29h-1zM395 630h1v34h-1zM396 677h2v13h-2zM398 523h1v61h-1zM399 605h1v85h-1zM402 580h1v25h-1zM403 580h1v38h-1zM404 584h1v21h-1zM404 618h1v12h-1zM405 605h1v13h-1zM407 618h1v30h-1zM409 580h1v4h-1zM410 535h3v20h-3zM410 584h3v64h-3zM410 677h3v13h-3zM414 523h1v12h-1zM414 677h1v13h-1zM417 535h1v16h-1zM417 584h1v21h-1zM418 535h1v16h-1zM419 513h1v10h-1zM420 630h2v18h-2zM420 677h2v13h-2zM422 527h1v24h-1zM422 618h1v30h-1zM428 584h1v21h-1zM429 584h1v64h-1zM430 584h1v64h-1zM431 677h1v13h-1zM432 664h1v26h-1zM433 523h3v61h-3zM433 677h3v13h-3zM437 531h1v20h-1zM437 618h1v12h-1zM438 584h1v64h-1zM439 555h1v29h-1zM439 630h1v34h-1zM440 555h1v50h-1zM440 618h1v12h-1zM440 664h1v13h-1zM442 677h1v13h-1zM443 605h1v25h-1zM445 535h1v16h-1zM445 618h1v12h-1zM446 513h1v18h-1zM446 535h1v20h-1zM453 523h1v4h-1zM453 551h1v4h-1zM454 677h1v13h-1zM455 523h1v12h-1zM459 531h1v20h-1zM460 584h2v21h-2zM462 531h1v12h-1zM462 584h1v21h-1zM463 584h1v46h-1zM463 677h1v13h-1zM464 580h1v4h-1zM467 677h1v13h-1zM468 523h2v61h-2zM468 677h2v13h-2zM471 605h1v59h-1zM473 584h1v80h-1zM473 677h1v13h-1zM476 523h2v4h-2zM476 630h2v47h-2zM478 568h1v37h-1zM479 551h1v54h-1zM480 543h1v12h-1zM481 584h1v21h-1zM481 618h1v12h-1zM484 523h1v12h-1zM484 605h1v43h-1zM485 677h1v13h-1zM486 618h1v59h-1zM488 513h1v30h-1zM488 584h1v46h-1zM490 523h1v32h-1zM491 513h1v10h-1zM491 543h1v8h-1zM491 580h1v4h-1zM493 584h1v93h-1zM494 531h1v20h-1zM495 531h1v37h-1zM496 618h1v12h-1zM498 664h2v26h-2zM500 605h1v43h-1zM501 555h2v13h-2zM503 618h1v46h-1zM504 618h1v72h-1zM506 618h1v12h-1zM507 648h2v42h-2zM509 677h1v13h-1zM512 605h1v43h-1zM512 677h1v13h-1zM513 531h2v20h-2zM513 584h2v80h-2zM517 664h1v13h-1zM519 677h1v13h-1zM520 543h2v41h-2zM520 664h2v26h-2zM522 584h3v106h-3zM525 527h2v28h-2zM525 584h2v21h-2zM527 531h1v20h-1zM529 543h1v8h-1zM529 584h1v34h-1zM532 580h1v4h-1zM533 531h1v20h-1zM533 677h1v13h-1zM535 618h2v30h-2zM535 677h2v13h-2zM541 677h1v13h-1zM543 677h1v13h-1zM544 543h2v8h-2zM546 677h1v13h-1zM547 568h1v12h-1zM547 630h1v18h-1zM548 618h1v12h-1zM549 531h1v37h-1zM549 618h1v72h-1zM553 677h1v13h-1zM554 630h1v18h-1zM556 677h1v13h-1zM557 584h1v21h-1zM558 618h1v46h-1zM558 677h1v13h-1zM559 580h1v4h-1zM559 618h1v59h-1zM560 677h1v13h-1zM561 527h1v28h-1zM562 677h1v13h-1zM563 605h1v25h-1zM563 677h1v13h-1zM564 618h1v59h-1zM565 535h1v16h-1zM566 677h1v13h-1zM568 535h1v16h-1zM569 618h1v59h-1zM570 568h1v16h-1zM570 630h1v34h-1zM572 568h1v50h-1zM577 527h1v4h-1zM577 605h1v13h-1zM579 523h1v4h-1zM580 543h1v12h-1zM580 618h1v30h-1zM583 630h1v18h-1zM585 584h1v34h-1zM585 677h1v13h-1zM587 605h2v43h-2zM589 677h1v13h-1zM593 531h1v20h-1zM594 677h2v13h-2zM604 677h3v13h-3zM607 605h1v59h-1zM607 677h1v13h-1zM608 527h1v53h-1zM608 677h1v13h-1zM609 630h1v47h-1zM610 648h1v42h-1zM611 523h1v28h-1zM612 618h3v30h-3zM612 677h3v13h-3zM617 527h1v8h-1zM617 618h1v59h-1zM618 618h1v12h-1zM618 677h1v13h-1zM619 527h2v28h-2zM621 677h1v13h-1zM622 523h1v8h-1zM623 677h1v13h-1zM627 531h1v20h-1zM627 618h1v30h-1zM627 677h1v13h-1zM629 618h3v46h-3zM632 535h1v16h-1zM633 605h1v43h-1zM634 630h1v18h-1zM635 677h1v13h-1zM637 677h1v13h-1zM638 531h1v20h-1zM638 677h1v13h-1zM639 527h3v24h-3zM639 630h3v18h-3zM639 677h3v13h-3zM642 664h1v13h-1zM644 618h2v59h-2zM646 535h1v20h-1zM646 630h1v34h-1zM647 618h1v46h-1zM648 630h1v18h-1zM648 677h1v13h-1zM649 543h1v8h-1zM649 555h1v50h-1zM650 531h1v20h-1zM652 677h1v13h-1zM653 584h1v46h-1zM654 523h1v32h-1zM654 677h1v13h-1zM655 535h1v33h-1zM656 677h2v13h-2zM658 584h2v64h-2zM660 630h1v18h-1zM660 664h1v26h-1zM661 555h1v13h-1zM661 580h1v4h-1zM664 531h1v20h-1zM664 605h1v25h-1zM664 677h1v13h-1zM665 523h1v32h-1zM666 523h1v28h-1zM668 535h1v8h-1zM669 677h1v13h-1zM670 580h1v110h-1zM671 618h1v72h-1zM672 618h1v30h-1zM674 531h1v4h-1zM674 677h1v13h-1zM675 543h1v8h-1zM677 618h1v30h-1zM677 664h1v26h-1zM679 513h1v10h-1zM679 584h1v34h-1zM679 648h1v42h-1zM680 677h1v13h-1zM681 648h1v29h-1zM682 513h1v10h-1zM682 527h1v16h-1zM682 584h1v64h-1zM684 677h1v13h-1zM686 677h1v13h-1zM687 523h1v32h-1zM687 677h1v13h-1zM688 618h1v12h-1zM689 648h1v16h-1zM689 677h1v13h-1zM690 618h1v59h-1zM691 513h3v30h-3zM691 618h3v30h-3zM694 677h1v13h-1zM697 568h1v16h-1zM697 677h1v13h-1zM699 531h1v4h-1zM699 677h1v13h-1zM700 605h1v25h-1zM700 677h1v13h-1zM701 618h1v12h-1zM701 677h1v13h-1zM703 551h1v79h-1zM704 677h1v13h-1zM705 543h1v37h-1zM705 618h1v46h-1zM706 618h2v30h-2zM708 580h1v68h-1zM709 677h1v13h-1zM710 568h1v37h-1zM711 535h1v16h-1zM712 531h1v4h-1zM713 580h1v110h-1zM714 584h1v93h-1zM715 648h2v16h-2zM715 677h2v13h-2zM719 618h1v30h-1zM720 580h1v25h-1zM720 630h1v47h-1zM721 527h1v16h-1zM721 584h1v64h-1zM722 513h1v10h-1zM722 555h1v29h-1zM722 648h1v42h-1zM723 584h1v64h-1zM724 677h1v13h-1zM726 618h1v12h-1zM727 543h2v8h-2zM729 531h1v4h-1zM729 677h1v13h-1zM731 677h1v13h-1zM732 630h2v18h-2zM735 664h2v26h-2zM737 535h1v16h-1zM737 555h1v63h-1zM739 527h1v28h-1zM739 677h1v13h-1zM740 677h1v13h-1zM742 543h1v8h-1zM743 584h1v21h-1zM744 630h1v47h-1zM745 618h1v30h-1zM746 618h1v12h-1zM747 555h1v13h-1zM747 677h1v13h-1zM748 584h2v21h-2zM750 535h2v20h-2zM752 535h1v8h-1zM757 618h2v12h-2zM757 677h2v13h-2zM759 630h1v18h-1zM760 527h1v24h-1zM760 630h1v18h-1zM761 535h2v49h-2zM764 605h1v13h-1zM765 527h1v24h-1zM766 543h1v8h-1zM768 677h1v13h-1zM770 584h1v21h-1zM770 618h1v30h-1zM771 535h1v16h-1zM772 630h1v18h-1zM772 677h1v13h-1zM773 531h1v20h-1zM773 580h1v4h-1zM774 531h1v53h-1zM775 535h1v16h-1zM776 584h1v64h-1zM776 677h1v13h-1zM777 677h1v13h-1zM778 543h1v8h-1zM778 605h1v13h-1zM780 677h1v13h-1zM781 677h1v13h-1zM782 543h1v12h-1zM782 584h1v64h-1zM786 605h1v13h-1zM786 630h1v18h-1zM786 677h1v13h-1zM787 531h1v20h-1zM789 648h1v29h-1zM792 618h1v30h-1zM794 527h1v4h-1zM794 568h1v16h-1zM795 523h1v61h-1zM795 630h1v18h-1zM795 677h1v13h-1zM796 535h2v16h-2zM799 630h2v47h-2zM801 605h1v43h-1zM801 677h1v13h-1zM802 677h1v13h-1zM803 568h2v50h-2zM803 630h2v18h-2zM805 584h1v34h-1zM805 630h1v34h-1zM806 527h2v8h-2zM808 630h1v47h-1zM810 605h3v25h-3zM815 527h1v57h-1zM817 677h1v13h-1zM818 543h1v25h-1zM819 584h1v64h-1zM820 584h1v46h-1zM822 551h1v33h-1zM823 535h1v16h-1zM823 677h1v13h-1zM824 618h1v30h-1zM825 584h2v46h-2zM827 543h3v12h-3zM827 677h3v13h-3zM831 605h1v43h-1zM831 677h1v13h-1zM832 584h1v21h-1zM832 618h1v12h-1zM833 580h1v38h-1zM835 513h1v38h-1zM835 677h1v13h-1zM837 618h1v12h-1zM838 584h1v34h-1zM839 580h1v4h-1zM839 618h1v59h-1zM843 605h1v25h-1zM847 543h1v8h-1zM847 630h1v60h-1zM848 584h1v34h-1zM848 677h1v13h-1zM849 584h1v80h-1zM850 580h1v68h-1zM851 523h1v28h-1zM852 531h1v12h-1zM855 605h1v59h-1zM856 584h1v46h-1zM856 677h1v13h-1zM857 584h1v64h-1zM858 605h1v25h-1zM858 648h1v29h-1zM859 584h1v64h-1zM860 584h1v34h-1zM860 630h1v34h-1zM860 677h1v13h-1zM861 523h1v8h-1zM861 648h1v16h-1zM861 677h1v13h-1zM862 531h1v24h-1zM862 605h1v85h-1zM863 531h1v12h-1zM863 630h1v34h-1zM865 543h1v25h-1zM865 677h1v13h-1zM866 535h1v16h-1zM869 584h1v21h-1zM869 630h1v18h-1zM869 677h1v13h-1zM871 605h1v13h-1zM871 677h1v13h-1zM872 584h1v21h-1zM872 618h1v30h-1zM873 523h1v82h-1zM873 677h1v13h-1zM874 605h1v25h-1zM874 677h1v13h-1zM875 535h1v33h-1zM875 630h1v18h-1zM875 677h1v13h-1zM876 677h1v13h-1zM877 535h1v16h-1zM877 584h1v34h-1zM879 584h1v64h-1zM880 531h1v24h-1zM880 677h1v13h-1zM881 584h1v46h-1zM883 605h1v13h-1zM885 584h1v64h-1zM886 523h1v4h-1zM886 677h1v13h-1zM887 523h1v125h-1zM887 677h1v13h-1zM888 677h1v13h-1zM889 664h1v26h-1zM890 551h1v17h-1zM891 677h1v13h-1zM892 605h1v43h-1zM892 677h1v13h-1zM893 535h1v8h-1zM893 551h1v4h-1zM893 677h1v13h-1zM894 584h1v64h-1zM895 535h1v16h-1zM898 605h1v13h-1zM898 630h1v18h-1zM899 535h2v16h-2zM899 605h2v72h-2zM901 527h1v8h-1zM901 677h1v13h-1zM903 535h1v16h-1zM903 677h1v13h-1zM904 677h1v13h-1zM905 551h1v33h-1zM906 527h1v24h-1zM908 513h1v71h-1zM908 630h1v60h-1zM909 535h3v49h-3zM912 568h2v37h-2zM914 677h1v13h-1zM915 584h1v21h-1zM916 677h1v13h-1zM917 523h1v8h-1zM921 584h1v21h-1zM922 535h1v16h-1zM922 618h1v30h-1zM922 677h1v13h-1zM923 584h2v46h-2zM925 531h1v24h-1zM926 527h1v4h-1zM926 584h1v64h-1zM929 527h1v41h-1zM929 677h1v13h-1zM930 543h1v8h-1zM931 648h3v29h-3zM937 584h1v64h-1zM938 677h1v13h-1zM939 523h3v20h-3zM939 677h3v13h-3zM942 584h1v64h-1zM943 513h1v38h-1zM943 568h1v50h-1zM944 527h1v24h-1zM944 677h1v13h-1zM945 543h1v8h-1zM945 584h1v64h-1zM949 605h2v72h-2zM951 618h1v30h-1zM952 618h2v30h-2zM954 551h1v17h-1zM954 677h1v13h-1zM956 630h2v18h-2zM956 677h2v13h-2zM958 513h1v10h-1zM958 677h1v13h-1zM960 535h1v16h-1zM961 513h1v14h-1zM961 531h1v4h-1zM962 618h1v12h-1zM965 513h1v42h-1zM966 648h1v16h-1zM967 584h1v46h-1zM967 664h1v26h-1zM968 618h1v30h-1zM968 677h1v13h-1zM969 618h1v30h-1zM969 677h1v13h-1zM971 527h1v24h-1zM971 630h1v34h-1zM973 677h1v13h-1zM974 618h1v12h-1zM974 677h1v13h-1zM976 527h1v16h-1zM976 584h1v21h-1zM976 664h1v26h-1zM980 527h1v24h-1zM980 677h1v13h-1zM981 568h1v37h-1zM981 677h1v13h-1zM982 531h1v20h-1zM982 568h1v80h-1zM983 527h1v28h-1zM983 677h1v13h-1zM984 568h1v12h-1zM984 618h1v30h-1zM984 677h1v13h-1zM985 677h1v13h-1zM988 568h1v16h-1zM991 531h1v20h-1zM991 568h1v16h-1zM992 584h1v106h-1zM993 531h1v53h-1zM993 677h1v13h-1zM994 677h3v13h-3zM998 605h1v13h-1zM998 630h1v34h-1zM998 677h1v13h-1zM999 605h1v25h-1zM1000 551h1v33h-1zM1001 630h1v18h-1zM1003 527h1v24h-1zM1005 555h2v29h-2zM1005 677h2v13h-2zM1007 605h1v43h-1zM1009 523h1v12h-1zM1010 531h1v20h-1zM1011 535h1v16h-1zM1012 677h2v13h-2zM1014 677h1v13h-1zM1015 584h1v80h-1zM1016 630h1v18h-1zM1017 535h1v16h-1zM1017 664h1v13h-1zM1019 677h1v13h-1zM1020 513h3v14h-3zM1020 584h3v64h-3zM1020 664h3v13h-3zM1023 584h1v64h-1zM1023 677h1v13h-1zM1024 584h1v64h-1zM1025 531h1v37h-1zM1025 605h1v25h-1zM1025 677h1v13h-1zM1026 523h2v61h-2zM1026 605h2v13h-2zM1028 618h1v46h-1zM1028 677h1v13h-1zM1030 531h1v20h-1zM1030 677h1v13h-1zM1031 677h1v13h-1zM1032 630h1v18h-1zM1033 580h1v4h-1zM1033 618h1v30h-1zM1034 677h1v13h-1zM1035 677h2v13h-2zM1037 568h3v50h-3zM1037 630h3v18h-3zM1040 648h2v42h-2zM1044 531h1v20h-1zM1044 618h1v30h-1zM1045 513h1v18h-1zM1046 677h1v13h-1zM1047 531h1v20h-1zM1047 605h1v13h-1zM1047 630h1v18h-1zM1049 677h1v13h-1zM1050 605h1v25h-1zM1051 605h1v25h-1zM1052 527h1v8h-1zM1053 584h1v64h-1zM1056 677h1v13h-1zM1057 531h1v12h-1zM1057 618h1v30h-1zM1057 677h1v13h-1zM1058 535h1v16h-1zM1058 584h1v64h-1zM1059 618h1v46h-1zM1059 677h1v13h-1zM1061 618h1v30h-1zM1064 584h1v21h-1zM1064 677h1v13h-1zM1065 677h1v13h-1zM1066 677h1v13h-1zM1067 605h1v59h-1zM1067 677h1v13h-1zM1068 605h1v43h-1zM1069 677h1v13h-1zM1070 580h1v25h-1zM1071 584h1v34h-1zM1071 677h1v13h-1zM1073 584h1v64h-1zM1074 630h2v18h-2zM1076 630h1v34h-1zM1077 568h1v16h-1zM1079 535h1v20h-1z" fill="url(#sg)"/>
<path d="M96 664h1v13h-1zM98 605h1v25h-1zM99 531h1v20h-1zM100 535h2v8h-2zM100 584h2v64h-2zM103 664h1v13h-1zM106 618h1v12h-1zM107 535h1v16h-1zM110 527h1v8h-1zM110 580h1v50h-1zM111 568h1v16h-1zM117 555h2v29h-2zM117 630h2v18h-2zM122 605h2v25h-2zM127 555h1v93h-1zM128 551h1v17h-1zM128 584h1v64h-1zM129 568h1v50h-1zM133 584h1v64h-1zM134 630h1v18h-1zM135 580h1v84h-1zM138 584h2v46h-2zM146 527h1v41h-1zM147 580h2v68h-2zM151 580h1v50h-1zM152 535h1v8h-1zM154 551h3v54h-3zM154 630h3v18h-3zM157 584h1v34h-1zM158 568h3v16h-3zM158 630h3v18h-3zM164 605h1v43h-1zM165 584h1v34h-1zM166 531h1v20h-1zM166 605h1v13h-1zM166 630h1v18h-1zM167 535h1v20h-1zM168 535h1v8h-1zM168 568h1v50h-1zM170 584h1v64h-1zM171 531h1v20h-1zM171 618h1v30h-1zM172 580h1v50h-1zM173 527h1v8h-1zM173 618h1v30h-1zM175 584h1v64h-1zM176 605h1v59h-1zM177 531h1v74h-1zM178 618h1v30h-1zM179 531h2v133h-2zM181 551h1v97h-1zM183 531h1v37h-1zM183 584h1v64h-1zM185 584h1v46h-1zM186 527h1v28h-1zM188 523h1v12h-1zM189 531h1v12h-1zM189 580h1v4h-1zM189 618h1v30h-1zM190 527h1v16h-1zM190 605h1v43h-1zM191 531h3v117h-3zM194 584h1v21h-1zM194 630h1v18h-1zM195 543h1v12h-1zM195 605h1v43h-1zM195 664h1v13h-1zM198 543h1v8h-1zM202 543h1v8h-1zM202 584h1v64h-1zM204 584h1v21h-1zM205 527h1v24h-1zM205 605h1v13h-1zM206 523h1v4h-1zM206 584h1v64h-1zM207 605h3v13h-3zM211 535h1v16h-1zM213 513h2v30h-2zM215 543h1v8h-1zM215 584h1v64h-1zM216 527h1v8h-1zM216 584h1v46h-1zM217 618h1v12h-1zM218 568h1v37h-1zM219 664h1v13h-1zM220 543h1v8h-1zM221 580h1v4h-1zM222 630h1v18h-1zM223 618h1v46h-1zM225 618h1v12h-1zM226 551h2v4h-2zM231 580h1v4h-1zM232 584h2v21h-2zM234 531h1v12h-1zM235 527h1v24h-1zM239 523h1v28h-1zM242 523h1v28h-1zM242 630h1v18h-1zM244 531h1v24h-1zM246 584h1v46h-1zM250 531h1v53h-1zM251 527h1v24h-1zM251 648h1v16h-1zM261 618h1v30h-1zM262 584h1v46h-1zM264 535h1v16h-1zM267 527h3v41h-3zM270 531h1v37h-1zM271 531h1v20h-1zM271 630h1v18h-1zM273 523h1v32h-1zM274 523h1v4h-1zM274 580h1v4h-1zM274 605h1v43h-1zM282 584h2v80h-2zM284 648h1v16h-1zM287 543h1v8h-1zM296 527h1v16h-1zM300 523h1v8h-1zM300 618h1v46h-1zM305 605h1v13h-1zM306 580h1v25h-1zM306 618h1v59h-1zM307 523h1v125h-1zM309 543h2v8h-2zM311 630h1v18h-1zM314 531h1v4h-1zM318 551h1v29h-1zM318 618h1v30h-1zM319 543h1v12h-1zM321 618h1v59h-1zM324 531h1v24h-1zM324 584h1v46h-1zM325 584h1v46h-1zM326 535h1v16h-1zM331 531h1v20h-1zM332 543h1v8h-1zM332 630h1v34h-1zM342 584h1v21h-1zM346 527h1v57h-1zM348 523h1v45h-1zM351 584h1v80h-1zM352 584h1v80h-1zM353 618h2v30h-2zM356 535h1v16h-1zM359 605h1v43h-1zM360 523h1v4h-1zM360 584h1v46h-1zM362 584h1v46h-1zM363 630h1v18h-1zM364 580h1v68h-1zM367 531h1v87h-1zM367 630h1v18h-1zM368 535h1v20h-1zM370 630h1v34h-1zM374 531h1v20h-1zM374 584h1v21h-1zM375 513h1v22h-1zM379 584h1v64h-1zM379 664h1v13h-1zM380 531h1v117h-1zM382 535h1v8h-1zM382 605h1v13h-1zM383 584h1v46h-1zM386 568h1v12h-1zM386 584h1v64h-1zM389 618h1v46h-1zM390 618h1v30h-1zM393 618h1v46h-1zM395 543h1v25h-1zM396 584h2v64h-2zM400 513h1v38h-1zM400 630h1v47h-1zM402 648h1v16h-1zM404 531h1v20h-1zM405 568h1v16h-1zM408 523h1v28h-1zM409 527h1v8h-1zM413 543h1v12h-1zM414 580h1v4h-1zM414 605h1v43h-1zM415 531h2v4h-2zM417 618h1v12h-1zM417 664h1v13h-1zM420 551h2v4h-2zM423 531h1v20h-1zM425 648h1v16h-1zM426 648h1v16h-1zM431 584h1v21h-1zM432 584h1v46h-1zM439 513h1v38h-1zM443 523h1v12h-1zM446 580h1v4h-1zM447 531h1v20h-1zM447 618h1v12h-1zM451 523h1v32h-1zM451 618h1v30h-1zM454 527h1v4h-1zM455 551h1v33h-1zM456 584h2v21h-2zM456 618h2v46h-2zM458 584h1v21h-1zM458 630h1v18h-1zM463 523h1v28h-1zM465 584h1v21h-1zM465 618h1v12h-1zM466 531h1v24h-1zM466 605h1v25h-1zM466 664h1v13h-1zM467 584h1v64h-1zM468 605h2v13h-2zM470 555h1v75h-1zM472 618h1v30h-1zM474 580h1v25h-1zM474 618h1v30h-1zM475 523h1v12h-1zM475 618h1v30h-1zM476 531h2v20h-2zM478 527h1v4h-1zM479 513h1v10h-1zM479 527h1v8h-1zM479 630h1v18h-1zM480 618h1v46h-1zM485 531h1v87h-1zM490 584h1v64h-1zM495 648h1v29h-1zM497 605h1v25h-1zM504 568h1v16h-1zM505 527h1v16h-1zM505 618h1v59h-1zM509 568h1v16h-1zM515 523h2v32h-2zM518 630h1v18h-1zM520 630h2v18h-2zM522 535h3v33h-3zM528 584h1v34h-1zM530 618h2v12h-2zM532 527h1v24h-1zM532 605h1v13h-1zM532 630h1v34h-1zM533 580h1v4h-1zM534 584h1v21h-1zM539 523h1v61h-1zM542 531h1v37h-1zM543 580h1v4h-1zM543 605h1v13h-1zM544 584h2v64h-2zM546 618h1v30h-1zM548 551h1v4h-1zM548 648h1v29h-1zM555 618h1v30h-1zM556 535h1v16h-1zM560 531h1v117h-1zM561 584h1v34h-1zM562 605h1v43h-1zM563 523h1v4h-1zM564 584h1v21h-1zM566 513h1v18h-1zM567 531h1v20h-1zM570 513h1v14h-1zM573 605h1v25h-1zM574 584h1v34h-1zM576 531h1v20h-1zM576 584h1v21h-1zM576 630h1v18h-1zM578 531h1v53h-1zM578 648h1v29h-1zM579 605h1v13h-1zM581 618h2v59h-2zM583 531h1v20h-1zM584 531h1v20h-1zM584 580h1v25h-1zM591 535h2v16h-2zM591 618h2v30h-2zM594 531h2v74h-2zM599 618h1v12h-1zM600 618h1v30h-1zM601 531h1v12h-1zM601 630h1v34h-1zM602 531h1v37h-1zM608 630h1v18h-1zM611 605h1v72h-1zM612 535h3v8h-3zM612 568h3v37h-3zM615 527h2v16h-2zM615 630h2v18h-2zM619 618h2v12h-2zM623 543h1v8h-1zM624 523h3v12h-3zM624 584h3v34h-3zM628 523h1v28h-1zM629 527h3v4h-3zM629 535h3v16h-3zM632 580h1v4h-1zM632 605h1v43h-1zM633 531h1v20h-1zM633 664h1v13h-1zM635 584h1v34h-1zM636 527h1v24h-1zM637 551h1v33h-1zM638 605h1v13h-1zM643 523h1v8h-1zM644 543h2v37h-2zM647 543h1v8h-1zM649 618h1v30h-1zM651 584h1v46h-1zM652 527h1v16h-1zM652 551h1v33h-1zM652 618h1v12h-1zM654 584h1v46h-1zM656 551h2v4h-2zM656 630h2v18h-2zM660 605h1v13h-1zM661 513h1v18h-1zM661 630h1v47h-1zM662 527h1v28h-1zM662 580h1v4h-1zM663 531h1v12h-1zM667 584h1v34h-1zM669 531h1v4h-1zM671 584h1v21h-1zM674 580h1v50h-1zM675 584h1v64h-1zM676 605h1v72h-1zM678 543h1v8h-1zM678 618h1v12h-1zM681 523h1v4h-1zM681 568h1v16h-1zM683 535h1v20h-1zM683 584h1v21h-1zM687 630h1v18h-1zM688 531h1v20h-1zM690 527h1v41h-1zM694 523h1v8h-1zM694 580h1v4h-1zM694 618h1v30h-1zM695 531h1v20h-1zM695 618h1v30h-1zM696 551h1v97h-1zM697 535h1v16h-1zM699 584h1v64h-1zM700 535h1v49h-1zM703 527h1v4h-1zM704 618h1v12h-1zM709 551h1v54h-1zM709 618h1v12h-1zM710 527h1v16h-1zM712 584h1v64h-1zM713 531h1v20h-1zM715 527h2v8h-2zM715 605h2v25h-2zM718 527h1v4h-1zM718 618h1v46h-1zM719 535h1v16h-1zM722 527h1v8h-1zM723 531h1v24h-1zM724 535h1v45h-1zM725 584h1v80h-1zM726 531h1v53h-1zM727 568h2v16h-2zM727 618h2v12h-2zM730 535h1v8h-1zM730 568h1v50h-1zM731 531h1v20h-1zM731 630h1v18h-1zM735 513h2v42h-2zM738 543h1v25h-1zM738 630h1v34h-1zM739 605h1v43h-1zM740 527h1v24h-1zM741 630h1v18h-1zM743 527h1v16h-1zM743 618h1v59h-1zM753 527h1v41h-1zM755 551h2v17h-2zM755 584h2v64h-2zM761 648h2v29h-2zM763 531h1v117h-1zM765 580h1v4h-1zM767 543h1v105h-1zM768 531h1v4h-1zM770 531h1v12h-1zM772 584h1v34h-1zM774 605h1v25h-1zM776 523h1v12h-1zM778 648h1v16h-1zM779 568h1v12h-1zM780 584h1v21h-1zM780 618h1v30h-1zM781 605h1v43h-1zM787 618h1v30h-1zM788 531h1v4h-1zM788 605h1v13h-1zM789 584h1v46h-1zM790 618h1v59h-1zM798 605h1v59h-1zM802 513h1v38h-1zM802 584h1v64h-1zM805 535h1v20h-1zM806 584h2v34h-2zM808 584h1v21h-1zM809 568h1v16h-1zM813 584h2v64h-2zM815 618h1v59h-1zM816 531h1v20h-1zM817 605h1v43h-1zM821 513h1v10h-1zM823 568h1v16h-1zM823 618h1v30h-1zM825 531h2v49h-2zM827 584h3v46h-3zM830 630h1v18h-1zM833 527h1v24h-1zM834 605h1v43h-1zM835 584h1v34h-1zM836 535h1v16h-1zM844 523h1v28h-1zM845 523h1v28h-1zM845 568h1v80h-1zM846 605h1v25h-1zM848 531h1v20h-1zM849 513h1v42h-1zM851 605h1v25h-1zM853 584h1v64h-1zM854 584h1v34h-1zM855 527h1v24h-1zM855 580h1v4h-1zM858 531h1v53h-1zM859 527h1v28h-1zM864 535h1v16h-1zM864 630h1v34h-1zM867 535h2v20h-2zM869 531h1v4h-1zM870 584h1v21h-1zM871 523h1v20h-1zM876 523h1v45h-1zM876 584h1v34h-1zM876 648h1v16h-1zM878 523h1v32h-1zM878 618h1v12h-1zM881 531h1v24h-1zM884 618h1v30h-1zM885 523h1v12h-1zM886 568h1v16h-1zM888 618h1v46h-1zM889 618h1v30h-1zM890 527h1v16h-1zM890 584h1v21h-1zM891 531h1v4h-1zM891 605h1v13h-1zM891 630h1v18h-1zM895 584h1v64h-1zM896 584h2v21h-2zM901 543h1v8h-1zM901 584h1v64h-1zM902 523h1v20h-1zM902 618h1v30h-1zM903 584h1v64h-1zM904 605h1v13h-1zM906 630h1v18h-1zM907 664h1v13h-1zM909 605h3v43h-3zM915 630h1v18h-1zM916 580h1v38h-1zM916 648h1v16h-1zM918 630h3v18h-3zM925 605h1v59h-1zM931 531h3v4h-3zM936 523h1v28h-1zM936 618h1v12h-1zM939 580h3v4h-3zM942 527h1v4h-1zM946 605h3v72h-3zM954 513h1v18h-1zM954 630h1v18h-1zM955 630h1v47h-1zM958 535h1v8h-1zM959 584h1v64h-1zM960 605h1v25h-1zM962 543h1v8h-1zM965 584h1v46h-1zM969 531h1v12h-1zM972 584h1v64h-1zM975 535h1v16h-1zM977 630h1v47h-1zM978 580h1v68h-1zM979 630h1v18h-1zM990 535h1v16h-1zM994 584h3v80h-3zM997 584h1v46h-1zM1001 568h1v37h-1zM1002 630h1v18h-1zM1010 605h1v13h-1zM1012 568h2v12h-2zM1014 527h1v24h-1zM1014 630h1v18h-1zM1016 527h1v24h-1zM1018 523h1v20h-1zM1018 584h1v34h-1zM1019 630h1v18h-1zM1025 648h1v16h-1zM1028 535h1v16h-1zM1029 535h1v20h-1zM1029 605h1v13h-1zM1034 527h1v16h-1zM1034 630h1v18h-1zM1035 580h2v4h-2zM1035 605h2v13h-2zM1040 531h2v24h-2zM1040 605h2v13h-2zM1042 535h1v16h-1zM1043 580h1v4h-1zM1045 551h1v33h-1zM1048 618h1v46h-1zM1049 584h1v21h-1zM1049 618h1v30h-1zM1050 535h1v20h-1zM1052 584h1v64h-1zM1054 568h2v96h-2zM1056 618h1v30h-1zM1059 584h1v21h-1zM1061 568h1v16h-1zM1062 555h2v50h-2zM1062 618h2v12h-2zM1064 543h1v12h-1zM1065 531h1v20h-1zM1065 584h1v46h-1zM1066 605h1v25h-1zM1067 531h1v20h-1zM1068 527h1v24h-1zM1069 580h1v4h-1zM1074 551h2v54h-2zM1077 543h1v8h-1z" fill="url(#sgd)"/>
<path d="M294 677H300V690H294zM300 648H304V690H300zM305.6 664H309V690H305.6zM309 630H315.6V690H309zM315.6 664H317V690H315.6zM317 630H321V690H317zM321 630H326V677H321zM326 630H327V690H326zM327 630H330V677H327zM330 630H331V690H330zM331 648H335V690H331zM335 677H339V690H335zM952 630H960V690H952zM963 630H966V690H963zM971 630H992V648H971zM993 630H1018V648H993zM975 648H998V690H975zM971 677H975V690H971zM998 648H1000V665H998zM998 677H1000V690H998zM1000 648H1010V690H1000zM96 664H104V690H96z" fill="url(#bg)"/>
<path d="M136.5 689L136.5 691M177.5 689L177.5 691M218.5 688L218.5 691M259.5 689L259.5 691M300.5 689L300.5 691M341.5 688L341.5 691M382.5 689L382.5 691M423.5 689L423.5 691M464.5 688L464.5 691M505.5 689L505.5 691M546.5 689L546.5 691M587.5 688L587.5 691M628.5 689L628.5 691M669.5 689L669.5 691M710.5 688L710.5 691M751.5 689L751.5 691M792.5 689L792.5 691M833.5 688L833.5 691M874.5 689L874.5 691M915.5 689L915.5 691M956.5 688L956.5 691M997.5 689L997.5 691M1038.5 689L1038.5 691" stroke="#555" stroke-width="1" fill="none"/>
<path d="M91 686.5L95 686.5M91 679.5L95 679.5M91 674.5L95 674.5M91 670.5L95 670.5M91 667.5L95 667.5M91 664.5L95 664.5M91 661.5L95 661.5M87 659.5L95 659.5M91 643.5L95 643.5M91 634.5L95 634.5M91 627.5L95 627.5M91 622.5L95 622.5M91 618.5L95 618.5M91 614.5L95 614.5M91 611.5L95 611.5M91 609.5L95 609.5M87 606.5L95 606.5M91 590.5L95 590.5M91 581.5L95 581.5M91 574.5L95 574.5M91 569.5L95 569.5M91 565.5L95 565.5M91 562.5L95 562.5M91 559.5L95 559.5M91 556.5L95 556.5M87 554.5L95 554.5M91 538.5L95 538.5M91 529.5L95 529.5M91 522.5L95 522.5M91 517.5L95 517.5M91 513.5L95 513.5" stroke="#333" stroke-width="1" fill="none"/>
<text x="59.93" y="561.5" fill="#3a3a3a">10</text>
<text x="74.83" y="555.4" fill="#3a3a3a">4</text>
<text x="59.93" y="614" fill="#3a3a3a">10</text>
<text x="74.83" y="607.9" fill="#3a3a3a">3</text>
<text x="59.93" y="666.5" fill="#3a3a3a">10</text>
<text x="74.83" y="660.4" fill="#3a3a3a">2</text>
<text transform="translate(49.8,602) rotate(-90)" text-anchor="middle" fill="#3a3a3a" textLength="72" lengthAdjust="spacingAndGlyphs">Energy (keV)</text>
<text x="9.5" y="536.7" fill="#3a3a3a" textLength="64.5" lengthAdjust="spacingAndGlyphs">LEMMS Ions</text>
<rect x="1092" y="515" width="12" height="176" fill="url(#cm)"/>
<path d="M1104.5 514.5L1104.5 691M1104 515.5L1113 515.5M1104 534.5L1109 534.5M1104 554.5L1113 554.5M1104 574.5L1109 574.5M1104 593.5L1113 593.5M1104 612.5L1109 612.5M1104 632.5L1113 632.5M1104 652.5L1109 652.5M1104 671.5L1113 671.5M1104 690.5L1113 690.5" stroke="#333" stroke-width="1" fill="none"/>
<text x="1117.5" y="522.4" fill="#3a3a3a">10</text>
<text x="1132.4" y="516.3" fill="#3a3a3a">4</text>
<text x="1117.5" y="561.4" fill="#3a3a3a">10</text>
<text x="1132.4" y="555.3" fill="#3a3a3a">2</text>
<text x="1117.5" y="600.4" fill="#3a3a3a">10</text>
<text x="1132.4" y="594.3" fill="#3a3a3a">0</text>
<text x="1117.5" y="639.4" fill="#3a3a3a">10</text>
<text x="1132.4" y="633.3" fill="#3a3a3a">−2</text>
<text x="1117.5" y="678.4" fill="#3a3a3a">10</text>
<text x="1132.4" y="672.3" fill="#3a3a3a">−4</text>
<text transform="translate(1157,601.5) rotate(90)" text-anchor="middle" fill="#3a3a3a" textLength="167" lengthAdjust="spacingAndGlyphs">intensity 1/(s cm^2 ster keV)</text>
<rect x="95" y="695" width="986" height="16" fill="#333"/>
<rect x="96" y="696" width="984" height="14" fill="#00ff00"/>
<rect x="96" y="696" width="36" height="14" fill="#ff0000"/>
<rect x="132" y="695" width="1" height="16" fill="#222"/>
<rect x="333" y="696" width="16" height="14" fill="#ff0000"/>
<rect x="333" y="695" width="1" height="16" fill="#222"/>
<rect x="349" y="695" width="1" height="16" fill="#222"/>
<rect x="412" y="696" width="14" height="14" fill="#ff0000"/>
<rect x="412" y="695" width="1" height="16" fill="#222"/>
<rect x="426" y="695" width="1" height="16" fill="#222"/>
<rect x="539" y="696" width="7" height="14" fill="#ff0000"/>
<rect x="539" y="695" width="1" height="16" fill="#222"/>
<rect x="546" y="695" width="1" height="16" fill="#222"/>
<rect x="598" y="696" width="7" height="14" fill="#ff0000"/>
<rect x="598" y="695" width="1" height="16" fill="#222"/>
<rect x="605" y="695" width="1" height="16" fill="#222"/>
<rect x="612" y="696" width="5" height="14" fill="#ff0000"/>
<rect x="612" y="695" width="1" height="16" fill="#222"/>
<rect x="617" y="695" width="1" height="16" fill="#222"/>
<rect x="1005" y="696" width="8" height="14" fill="#ff0000"/>
<rect x="1005" y="695" width="1" height="16" fill="#222"/>
<rect x="1013" y="695" width="1" height="16" fill="#222"/>
<text x="80" y="707.5" text-anchor="end" fill="#3a3a3a" textLength="51" lengthAdjust="spacingAndGlyphs">Sunlight?</text>
<path d="M136.5 711L136.5 715M177.5 711L177.5 715M218.5 711L218.5 719M259.5 711L259.5 715M300.5 711L300.5 715M341.5 711L341.5 719M382.5 711L382.5 715M423.5 711L423.5 715M464.5 711L464.5 719M505.5 711L505.5 715M546.5 711L546.5 715M587.5 711L587.5 719M628.5 711L628.5 715M669.5 711L669.5 715M710.5 711L710.5 719M751.5 711L751.5 715M792.5 711L792.5 715M833.5 711L833.5 719M874.5 711L874.5 715M915.5 711L915.5 715M956.5 711L956.5 719M997.5 711L997.5 715M1038.5 711L1038.5 715M1080.5 711L1080.5 719" stroke="#333" stroke-width="1" fill="none"/>
<text x="218.12" y="734" text-anchor="middle" fill="#3a3a3a" textLength="35" lengthAdjust="spacingAndGlyphs">03:00</text>
<text x="218.12" y="749.2" text-anchor="middle" fill="#3a3a3a" textLength="34" lengthAdjust="spacingAndGlyphs">13.17</text>
<text x="218.12" y="763.8" text-anchor="middle" fill="#3a3a3a" textLength="34" lengthAdjust="spacingAndGlyphs">36.85</text>
<text x="218.12" y="779" text-anchor="middle" fill="#3a3a3a" textLength="34" lengthAdjust="spacingAndGlyphs">36.86</text>
<text x="341.25" y="734" text-anchor="middle" fill="#3a3a3a" textLength="35" lengthAdjust="spacingAndGlyphs">06:00</text>
<text x="341.25" y="749.2" text-anchor="middle" fill="#3a3a3a" textLength="34" lengthAdjust="spacingAndGlyphs">13.20</text>
<text x="341.25" y="763.8" text-anchor="middle" fill="#3a3a3a" textLength="34" lengthAdjust="spacingAndGlyphs">37.43</text>
<text x="341.25" y="779" text-anchor="middle" fill="#3a3a3a" textLength="34" lengthAdjust="spacingAndGlyphs">37.43</text>
<text x="464.38" y="734" text-anchor="middle" fill="#3a3a3a" textLength="35" lengthAdjust="spacingAndGlyphs">09:00</text>
<text x="464.38" y="749.2" text-anchor="middle" fill="#3a3a3a" textLength="34" lengthAdjust="spacingAndGlyphs">13.23</text>
<text x="464.38" y="763.8" text-anchor="middle" fill="#3a3a3a" textLength="34" lengthAdjust="spacingAndGlyphs">38.00</text>
<text x="464.38" y="779" text-anchor="middle" fill="#3a3a3a" textLength="34" lengthAdjust="spacingAndGlyphs">38.00</text>
<text x="587.5" y="734" text-anchor="middle" fill="#3a3a3a" textLength="35" lengthAdjust="spacingAndGlyphs">12:00</text>
<text x="587.5" y="749.2" text-anchor="middle" fill="#3a3a3a" textLength="34" lengthAdjust="spacingAndGlyphs">13.26</text>
<text x="587.5" y="763.8" text-anchor="middle" fill="#3a3a3a" textLength="34" lengthAdjust="spacingAndGlyphs">38.55</text>
<text x="587.5" y="779" text-anchor="middle" fill="#3a3a3a" textLength="34" lengthAdjust="spacingAndGlyphs">38.55</text>
<text x="710.62" y="734" text-anchor="middle" fill="#3a3a3a" textLength="35" lengthAdjust="spacingAndGlyphs">15:00</text>
<text x="710.62" y="749.2" text-anchor="middle" fill="#3a3a3a" textLength="34" lengthAdjust="spacingAndGlyphs">13.29</text>
<text x="710.62" y="763.8" text-anchor="middle" fill="#3a3a3a" textLength="34" lengthAdjust="spacingAndGlyphs">39.10</text>
<text x="710.62" y="779" text-anchor="middle" fill="#3a3a3a" textLength="34" lengthAdjust="spacingAndGlyphs">39.10</text>
<text x="833.75" y="734" text-anchor="middle" fill="#3a3a3a" textLength="35" lengthAdjust="spacingAndGlyphs">18:00</text>
<text x="833.75" y="749.2" text-anchor="middle" fill="#3a3a3a" textLength="34" lengthAdjust="spacingAndGlyphs">13.31</text>
<text x="833.75" y="763.8" text-anchor="middle" fill="#3a3a3a" textLength="34" lengthAdjust="spacingAndGlyphs">39.63</text>
<text x="833.75" y="779" text-anchor="middle" fill="#3a3a3a" textLength="34" lengthAdjust="spacingAndGlyphs">39.64</text>
<text x="956.88" y="734" text-anchor="middle" fill="#3a3a3a" textLength="35" lengthAdjust="spacingAndGlyphs">21:00</text>
<text x="956.88" y="749.2" text-anchor="middle" fill="#3a3a3a" textLength="34" lengthAdjust="spacingAndGlyphs">13.34</text>
<text x="956.88" y="763.8" text-anchor="middle" fill="#3a3a3a" textLength="34" lengthAdjust="spacingAndGlyphs">40.16</text>
<text x="956.88" y="779" text-anchor="middle" fill="#3a3a3a" textLength="34" lengthAdjust="spacingAndGlyphs">40.17</text>
<text x="1080" y="734" text-anchor="middle" fill="#3a3a3a" textLength="35" lengthAdjust="spacingAndGlyphs">00:00</text>
<text x="1080" y="749.2" text-anchor="middle" fill="#3a3a3a" textLength="34" lengthAdjust="spacingAndGlyphs">13.37</text>
<text x="1080" y="763.8" text-anchor="middle" fill="#3a3a3a" textLength="34" lengthAdjust="spacingAndGlyphs">40.67</text>
<text x="1080" y="779" text-anchor="middle" fill="#3a3a3a" textLength="34" lengthAdjust="spacingAndGlyphs">40.69</text>
<text x="59" y="749.2" text-anchor="end" fill="#3a3a3a" textLength="42.7" lengthAdjust="spacingAndGlyphs">LT (hrs)</text>
<text x="59" y="763.8" text-anchor="end" fill="#3a3a3a" textLength="14" lengthAdjust="spacingAndGlyphs">Rs</text>
<text x="59" y="779" text-anchor="end" fill="#3a3a3a" textLength="45.6" lengthAdjust="spacingAndGlyphs">Dipole L</text>
<path d="M215.5 802.5H366.5V950.5H215.5Z" stroke="#333" stroke-width="1" fill="none"/>
<path d="M248.34 802.5L246.06 806.2L243.89 809.9L241.84 813.6L239.91 817.3L238.1 821L236.4 824.7L234.82 828.4L233.36 832.1L232.02 835.8L230.79 839.5L229.68 843.2L228.68 846.9L227.8 850.6L227.04 854.3L226.4 858L225.87 861.7L225.46 865.4L225.17 869.1L225 872.8L224.94 876.5L225 880.2L225.17 883.9L225.46 887.6L225.87 891.3L226.4 895L227.04 898.7L227.8 902.4L228.68 906.1L229.68 909.8L230.79 913.5L232.02 917.2L233.36 920.9L234.82 924.6L236.4 928.3L238.1 932L239.91 935.7L241.84 939.4L243.89 943.1L246.06 946.8L248.34 950.5" stroke="#1010ff" stroke-width="1.1" fill="none" stroke-dasharray="2 1.6"/>
<path d="M283.59 802.5L279.55 806.2L275.72 809.9L272.1 813.6L268.68 817.3L265.48 821L262.47 824.7L259.68 828.4L257.09 832.1L254.71 835.8L252.54 839.5L250.57 843.2L248.81 846.9L247.26 850.6L245.91 854.3L244.78 858L243.84 861.7L243.12 865.4L242.6 869.1L242.29 872.8L242.19 876.5L242.29 880.2L242.6 883.9L243.12 887.6L243.84 891.3L244.78 895L245.91 898.7L247.26 902.4L248.81 906.1L250.57 909.8L252.54 913.5L254.71 917.2L257.09 920.9L259.68 924.6L262.47 928.3L265.48 932L268.68 935.7L272.1 939.4L275.72 943.1L279.55 946.8L283.59 950.5" stroke="#8a4a10" stroke-width="1.1" fill="none" stroke-dasharray="2 1.6"/>
<circle cx="292.5" cy="877" r="37.6" stroke="#111" stroke-width="1.3" fill="none"/>
<ellipse cx="292" cy="877" rx="2" ry="1.5" stroke="#111" stroke-width="1" fill="none"/>
<path d="M215.5 907C228 891 250 873 284 864.3" stroke="#111" stroke-width="1.3" fill="none"/>
<path d="M219 902L227.5 893.5" stroke="#1010ff" stroke-width="4" stroke-linecap="round"/>
<path d="M221.1 889.1L230.1 898.1M221.1 898.1L230.1 889.1" stroke="#f02020" stroke-width="1.3"/>
<circle cx="278" cy="911.3" r="2.6" fill="#f01010"/>
<path d="M207 802.5L215.5 802.5M216.5 950.5L216.5 958.5M207 820.5L215.5 820.5M235.5 950.5L235.5 955M207 839.5L215.5 839.5M254.5 950.5L254.5 958.5M207 858.5L215.5 858.5M272.5 950.5L272.5 955M207 876.5L215.5 876.5M291.5 950.5L291.5 958.5M207 894.5L215.5 894.5M310.5 950.5L310.5 955M207 913.5L215.5 913.5M328.5 950.5L328.5 958.5M207 932.5L215.5 932.5M347.5 950.5L347.5 955M207 950.5L215.5 950.5M366.5 950.5L366.5 958.5M211 804.5L215.5 804.5M211 806.5L215.5 806.5M211 808.5L215.5 808.5M211 809.5L215.5 809.5M211 811.5L215.5 811.5M211 813.5L215.5 813.5M211 815.5L215.5 815.5M211 817.5L215.5 817.5M211 819.5L215.5 819.5M211 822.5L215.5 822.5M211 824.5L215.5 824.5M211 826.5L215.5 826.5M211 828.5L215.5 828.5M211 830.5L215.5 830.5M211 832.5L215.5 832.5M211 833.5L215.5 833.5M211 835.5L215.5 835.5M211 837.5L215.5 837.5M211 841.5L215.5 841.5M211 843.5L215.5 843.5M211 845.5L215.5 845.5M211 846.5L215.5 846.5M211 848.5L215.5 848.5M211 850.5L215.5 850.5M211 852.5L215.5 852.5M211 854.5L215.5 854.5M211 856.5L215.5 856.5M211 859.5L215.5 859.5M211 861.5L215.5 861.5M211 863.5L215.5 863.5M211 865.5L215.5 865.5M211 867.5L215.5 867.5M211 869.5L215.5 869.5M211 870.5L215.5 870.5M211 872.5L215.5 872.5M211 874.5L215.5 874.5M211 878.5L215.5 878.5M211 880.5L215.5 880.5M211 882.5L215.5 882.5M211 883.5L215.5 883.5M211 885.5L215.5 885.5M211 887.5L215.5 887.5M211 889.5L215.5 889.5M211 891.5L215.5 891.5M211 893.5L215.5 893.5M211 896.5L215.5 896.5M211 898.5L215.5 898.5M211 900.5L215.5 900.5M211 902.5L215.5 902.5M211 904.5L215.5 904.5M211 906.5L215.5 906.5M211 907.5L215.5 907.5M211 909.5L215.5 909.5M211 911.5L215.5 911.5M211 915.5L215.5 915.5M211 917.5L215.5 917.5M211 919.5L215.5 919.5M211 920.5L215.5 920.5M211 922.5L215.5 922.5M211 924.5L215.5 924.5M211 926.5L215.5 926.5M211 928.5L215.5 928.5M211 930.5L215.5 930.5M211 933.5L215.5 933.5M211 935.5L215.5 935.5M211 937.5L215.5 937.5M211 939.5L215.5 939.5M211 941.5L215.5 941.5M211 943.5L215.5 943.5M211 944.5L215.5 944.5M211 946.5L215.5 946.5M211 948.5L215.5 948.5" stroke="#333" stroke-width="1" fill="none"/>
<text x="201" y="807.1" text-anchor="end" fill="#3a3a3a" textLength="24.87" lengthAdjust="spacingAndGlyphs">−40.</text>
<text x="201" y="825.6" text-anchor="end" fill="#3a3a3a" textLength="24.87" lengthAdjust="spacingAndGlyphs">−30.</text>
<text x="201" y="844.1" text-anchor="end" fill="#3a3a3a" textLength="24.87" lengthAdjust="spacingAndGlyphs">−20.</text>
<text x="201" y="862.6" text-anchor="end" fill="#3a3a3a" textLength="24.87" lengthAdjust="spacingAndGlyphs">−10.</text>
<text x="201" y="881.1" text-anchor="end" fill="#3a3a3a" textLength="10.5" lengthAdjust="spacingAndGlyphs">0.</text>
<text x="201" y="899.6" text-anchor="end" fill="#3a3a3a" textLength="17.51" lengthAdjust="spacingAndGlyphs">10.</text>
<text x="201" y="918.1" text-anchor="end" fill="#3a3a3a" textLength="17.51" lengthAdjust="spacingAndGlyphs">20.</text>
<text x="201" y="936.6" text-anchor="end" fill="#3a3a3a" textLength="17.51" lengthAdjust="spacingAndGlyphs">30.</text>
<text x="201" y="955.1" text-anchor="end" fill="#3a3a3a" textLength="17.51" lengthAdjust="spacingAndGlyphs">40.</text>
<text x="216.5" y="973.8" text-anchor="middle" fill="#3a3a3a" textLength="17.51" lengthAdjust="spacingAndGlyphs">40.</text>
<text x="254" y="973.8" text-anchor="middle" fill="#3a3a3a" textLength="17.51" lengthAdjust="spacingAndGlyphs">20.</text>
<text x="291.5" y="973.8" text-anchor="middle" fill="#3a3a3a" textLength="10.5" lengthAdjust="spacingAndGlyphs">0.</text>
<text x="329" y="973.8" text-anchor="middle" fill="#3a3a3a" textLength="24.87" lengthAdjust="spacingAndGlyphs">−20.</text>
<text x="366.5" y="973.8" text-anchor="middle" fill="#3a3a3a" textLength="24.87" lengthAdjust="spacingAndGlyphs">−40.</text>
<text x="291" y="991.8" text-anchor="middle" fill="#3a3a3a" textLength="37.5" lengthAdjust="spacingAndGlyphs">KSM-X</text>
<text transform="translate(167.5,876.7) rotate(-90)" text-anchor="middle" fill="#3a3a3a" textLength="36" lengthAdjust="spacingAndGlyphs">KSM-Y</text>
<path d="M509.5 802.5H660.5V950.5H509.5Z" stroke="#333" stroke-width="1" fill="none"/>
<path d="M542.34 802.5L540.06 806.2L537.89 809.9L535.84 813.6L533.91 817.3L532.1 821L530.4 824.7L528.82 828.4L527.36 832.1L526.02 835.8L524.79 839.5L523.68 843.2L522.68 846.9L521.8 850.6L521.04 854.3L520.4 858L519.87 861.7L519.46 865.4L519.17 869.1L519 872.8L518.94 876.5L519 880.2L519.17 883.9L519.46 887.6L519.87 891.3L520.4 895L521.04 898.7L521.8 902.4L522.68 906.1L523.68 909.8L524.79 913.5L526.02 917.2L527.36 920.9L528.82 924.6L530.4 928.3L532.1 932L533.91 935.7L535.84 939.4L537.89 943.1L540.06 946.8L542.34 950.5" stroke="#1010ff" stroke-width="1.1" fill="none" stroke-dasharray="2 1.6"/>
<path d="M577.59 802.5L573.55 806.2L569.72 809.9L566.1 813.6L562.68 817.3L559.48 821L556.47 824.7L553.68 828.4L551.09 832.1L548.71 835.8L546.54 839.5L544.57 843.2L542.81 846.9L541.26 850.6L539.91 854.3L538.77 858L537.84 861.7L537.12 865.4L536.6 869.1L536.29 872.8L536.19 876.5L536.29 880.2L536.6 883.9L537.12 887.6L537.84 891.3L538.77 895L539.91 898.7L541.26 902.4L542.81 906.1L544.57 909.8L546.54 913.5L548.71 917.2L551.09 920.9L553.68 924.6L556.47 928.3L559.48 932L562.68 935.7L566.1 939.4L569.72 943.1L573.55 946.8L577.59 950.5" stroke="#8a4a10" stroke-width="1.1" fill="none" stroke-dasharray="2 1.6"/>
<path d="M509.5 866.9C540 869 570 874 623.5 884.3" stroke="#111" stroke-width="1.6" fill="none"/>
<path d="M513.5 867H522" stroke="#1010ff" stroke-width="5" stroke-linecap="round"/>
<path d="M514.3 862.5L523.3 871.5M514.3 871.5L523.3 862.5" stroke="#f02020" stroke-width="1.3"/>
<circle cx="572" cy="874" r="2.6" fill="#f01010"/>
<rect x="584" y="875.5" width="3" height="3" fill="none" stroke="#333" stroke-width="1"/>
<path d="M501 802.5L509.5 802.5M510.5 950.5L510.5 958.5M501 820.5L509.5 820.5M529.5 950.5L529.5 955M501 839.5L509.5 839.5M548.5 950.5L548.5 958.5M501 858.5L509.5 858.5M566.5 950.5L566.5 955M501 876.5L509.5 876.5M585.5 950.5L585.5 958.5M501 894.5L509.5 894.5M604.5 950.5L604.5 955M501 913.5L509.5 913.5M622.5 950.5L622.5 958.5M501 932.5L509.5 932.5M641.5 950.5L641.5 955M501 950.5L509.5 950.5M660.5 950.5L660.5 958.5M505 804.5L509.5 804.5M505 806.5L509.5 806.5M505 808.5L509.5 808.5M505 809.5L509.5 809.5M505 811.5L509.5 811.5M505 813.5L509.5 813.5M505 815.5L509.5 815.5M505 817.5L509.5 817.5M505 819.5L509.5 819.5M505 822.5L509.5 822.5M505 824.5L509.5 824.5M505 826.5L509.5 826.5M505 828.5L509.5 828.5M505 830.5L509.5 830.5M505 832.5L509.5 832.5M505 833.5L509.5 833.5M505 835.5L509.5 835.5M505 837.5L509.5 837.5M505 841.5L509.5 841.5M505 843.5L509.5 843.5M505 845.5L509.5 845.5M505 846.5L509.5 846.5M505 848.5L509.5 848.5M505 850.5L509.5 850.5M505 852.5L509.5 852.5M505 854.5L509.5 854.5M505 856.5L509.5 856.5M505 859.5L509.5 859.5M505 861.5L509.5 861.5M505 863.5L509.5 863.5M505 865.5L509.5 865.5M505 867.5L509.5 867.5M505 869.5L509.5 869.5M505 870.5L509.5 870.5M505 872.5L509.5 872.5M505 874.5L509.5 874.5M505 878.5L509.5 878.5M505 880.5L509.5 880.5M505 882.5L509.5 882.5M505 883.5L509.5 883.5M505 885.5L509.5 885.5M505 887.5L509.5 887.5M505 889.5L509.5 889.5M505 891.5L509.5 891.5M505 893.5L509.5 893.5M505 896.5L509.5 896.5M505 898.5L509.5 898.5M505 900.5L509.5 900.5M505 902.5L509.5 902.5M505 904.5L509.5 904.5M505 906.5L509.5 906.5M505 907.5L509.5 907.5M505 909.5L509.5 909.5M505 911.5L509.5 911.5M505 915.5L509.5 915.5M505 917.5L509.5 917.5M505 919.5L509.5 919.5M505 920.5L509.5 920.5M505 922.5L509.5 922.5M505 924.5L509.5 924.5M505 926.5L509.5 926.5M505 928.5L509.5 928.5M505 930.5L509.5 930.5M505 933.5L509.5 933.5M505 935.5L509.5 935.5M505 937.5L509.5 937.5M505 939.5L509.5 939.5M505 941.5L509.5 941.5M505 943.5L509.5 943.5M505 944.5L509.5 944.5M505 946.5L509.5 946.5M505 948.5L509.5 948.5" stroke="#333" stroke-width="1" fill="none"/>
<text x="495" y="807.1" text-anchor="end" fill="#3a3a3a" textLength="17.51" lengthAdjust="spacingAndGlyphs">40.</text>
<text x="495" y="825.6" text-anchor="end" fill="#3a3a3a" textLength="17.51" lengthAdjust="spacingAndGlyphs">30.</text>
<text x="495" y="844.1" text-anchor="end" fill="#3a3a3a" textLength="17.51" lengthAdjust="spacingAndGlyphs">20.</text>
<text x="495" y="862.6" text-anchor="end" fill="#3a3a3a" textLength="17.51" lengthAdjust="spacingAndGlyphs">10.</text>
<text x="495" y="881.1" text-anchor="end" fill="#3a3a3a" textLength="10.5" lengthAdjust="spacingAndGlyphs">0.</text>
<text x="495" y="899.6" text-anchor="end" fill="#3a3a3a" textLength="24.87" lengthAdjust="spacingAndGlyphs">−10.</text>
<text x="495" y="918.1" text-anchor="end" fill="#3a3a3a" textLength="24.87" lengthAdjust="spacingAndGlyphs">−20.</text>
<text x="495" y="936.6" text-anchor="end" fill="#3a3a3a" textLength="24.87" lengthAdjust="spacingAndGlyphs">−30.</text>
<text x="495" y="955.1" text-anchor="end" fill="#3a3a3a" textLength="24.87" lengthAdjust="spacingAndGlyphs">−40.</text>
<text x="510.5" y="973.8" text-anchor="middle" fill="#3a3a3a" textLength="17.51" lengthAdjust="spacingAndGlyphs">40.</text>
<text x="548" y="973.8" text-anchor="middle" fill="#3a3a3a" textLength="17.51" lengthAdjust="spacingAndGlyphs">20.</text>
<text x="585.5" y="973.8" text-anchor="middle" fill="#3a3a3a" textLength="10.5" lengthAdjust="spacingAndGlyphs">0.</text>
<text x="623" y="973.8" text-anchor="middle" fill="#3a3a3a" textLength="24.87" lengthAdjust="spacingAndGlyphs">−20.</text>
<text x="660.5" y="973.8" text-anchor="middle" fill="#3a3a3a" textLength="24.87" lengthAdjust="spacingAndGlyphs">−40.</text>
<text x="585" y="991.8" text-anchor="middle" fill="#3a3a3a" textLength="37.5" lengthAdjust="spacingAndGlyphs">KSM-X</text>
<text transform="translate(461.5,876.7) rotate(-90)" text-anchor="middle" fill="#3a3a3a" textLength="36" lengthAdjust="spacingAndGlyphs">KSM-Z</text>
<path d="M803.5 802.5H954.5V950.5H803.5Z" stroke="#333" stroke-width="1" fill="none"/>
<ellipse cx="879.3" cy="877" rx="38.5" ry="7" stroke="#111" stroke-width="1.3" fill="none"/>
<path d="M866.3 875.6C869 871.5 874 870 884.7 868.7L897.7 867.6L929.7 867.4" stroke="#111" stroke-width="1.3" fill="none"/>
<path d="M897 867.5H905.3" stroke="#1010ff" stroke-width="5" stroke-linecap="round"/>
<path d="M892.1 862.5L901.1 871.5M892.1 871.5L901.1 862.5" stroke="#f02020" stroke-width="1.3"/>
<circle cx="914.4" cy="874" r="2.6" fill="#f01010"/>
<ellipse cx="879.5" cy="877.5" rx="2" ry="1.6" stroke="#8a4a10" stroke-width="1" fill="none"/>
<path d="M795 802.5L803.5 802.5M804.5 950.5L804.5 958.5M795 820.5L803.5 820.5M823.5 950.5L823.5 955M795 839.5L803.5 839.5M842.5 950.5L842.5 958.5M795 858.5L803.5 858.5M860.5 950.5L860.5 955M795 876.5L803.5 876.5M879.5 950.5L879.5 958.5M795 894.5L803.5 894.5M898.5 950.5L898.5 955M795 913.5L803.5 913.5M916.5 950.5L916.5 958.5M795 932.5L803.5 932.5M935.5 950.5L935.5 955M795 950.5L803.5 950.5M954.5 950.5L954.5 958.5M799 804.5L803.5 804.5M799 806.5L803.5 806.5M799 808.5L803.5 808.5M799 809.5L803.5 809.5M799 811.5L803.5 811.5M799 813.5L803.5 813.5M799 815.5L803.5 815.5M799 817.5L803.5 817.5M799 819.5L803.5 819.5M799 822.5L803.5 822.5M799 824.5L803.5 824.5M799 826.5L803.5 826.5M799 828.5L803.5 828.5M799 830.5L803.5 830.5M799 832.5L803.5 832.5M799 833.5L803.5 833.5M799 835.5L803.5 835.5M799 837.5L803.5 837.5M799 841.5L803.5 841.5M799 843.5L803.5 843.5M799 845.5L803.5 845.5M799 846.5L803.5 846.5M799 848.5L803.5 848.5M799 850.5L803.5 850.5M799 852.5L803.5 852.5M799 854.5L803.5 854.5M799 856.5L803.5 856.5M799 859.5L803.5 859.5M799 861.5L803.5 861.5M799 863.5L803.5 863.5M799 865.5L803.5 865.5M799 867.5L803.5 867.5M799 869.5L803.5 869.5M799 870.5L803.5 870.5M799 872.5L803.5 872.5M799 874.5L803.5 874.5M799 878.5L803.5 878.5M799 880.5L803.5 880.5M799 882.5L803.5 882.5M799 883.5L803.5 883.5M799 885.5L803.5 885.5M799 887.5L803.5 887.5M799 889.5L803.5 889.5M799 891.5L803.5 891.5M799 893.5L803.5 893.5M799 896.5L803.5 896.5M799 898.5L803.5 898.5M799 900.5L803.5 900.5M799 902.5L803.5 902.5M799 904.5L803.5 904.5M799 906.5L803.5 906.5M799 907.5L803.5 907.5M799 909.5L803.5 909.5M799 911.5L803.5 911.5M799 915.5L803.5 915.5M799 917.5L803.5 917.5M799 919.5L803.5 919.5M799 920.5L803.5 920.5M799 922.5L803.5 922.5M799 924.5L803.5 924.5M799 926.5L803.5 926.5M799 928.5L803.5 928.5M799 930.5L803.5 930.5M799 933.5L803.5 933.5M799 935.5L803.5 935.5M799 937.5L803.5 937.5M799 939.5L803.5 939.5M799 941.5L803.5 941.5M799 943.5L803.5 943.5M799 944.5L803.5 944.5M799 946.5L803.5 946.5M799 948.5L803.5 948.5" stroke="#333" stroke-width="1" fill="none"/>
<text x="789" y="807.1" text-anchor="end" fill="#3a3a3a" textLength="17.51" lengthAdjust="spacingAndGlyphs">40.</text>
<text x="789" y="825.6" text-anchor="end" fill="#3a3a3a" textLength="17.51" lengthAdjust="spacingAndGlyphs">30.</text>
<text x="789" y="844.1" text-anchor="end" fill="#3a3a3a" textLength="17.51" lengthAdjust="spacingAndGlyphs">20.</text>
<text x="789" y="862.6" text-anchor="end" fill="#3a3a3a" textLength="17.51" lengthAdjust="spacingAndGlyphs">10.</text>
<text x="789" y="881.1" text-anchor="end" fill="#3a3a3a" textLength="10.5" lengthAdjust="spacingAndGlyphs">0.</text>
<text x="789" y="899.6" text-anchor="end" fill="#3a3a3a" textLength="24.87" lengthAdjust="spacingAndGlyphs">−10.</text>
<text x="789" y="918.1" text-anchor="end" fill="#3a3a3a" textLength="24.87" lengthAdjust="spacingAndGlyphs">−20.</text>
<text x="789" y="936.6" text-anchor="end" fill="#3a3a3a" textLength="24.87" lengthAdjust="spacingAndGlyphs">−30.</text>
<text x="789" y="955.1" text-anchor="end" fill="#3a3a3a" textLength="24.87" lengthAdjust="spacingAndGlyphs">−40.</text>
<text x="804.5" y="973.8" text-anchor="middle" fill="#3a3a3a" textLength="24.87" lengthAdjust="spacingAndGlyphs">−40.</text>
<text x="842" y="973.8" text-anchor="middle" fill="#3a3a3a" textLength="24.87" lengthAdjust="spacingAndGlyphs">−20.</text>
<text x="879.5" y="973.8" text-anchor="middle" fill="#3a3a3a" textLength="10.5" lengthAdjust="spacingAndGlyphs">0.</text>
<text x="917" y="973.8" text-anchor="middle" fill="#3a3a3a" textLength="17.51" lengthAdjust="spacingAndGlyphs">20.</text>
<text x="954.5" y="973.8" text-anchor="middle" fill="#3a3a3a" textLength="17.51" lengthAdjust="spacingAndGlyphs">40.</text>
<text x="879" y="991.8" text-anchor="middle" fill="#3a3a3a" textLength="37.5" lengthAdjust="spacingAndGlyphs">KSM-Y</text>
<text transform="translate(755.5,876.7) rotate(-90)" text-anchor="middle" fill="#3a3a3a" textLength="36" lengthAdjust="spacingAndGlyphs">KSM-Z</text></svg></body></html>
